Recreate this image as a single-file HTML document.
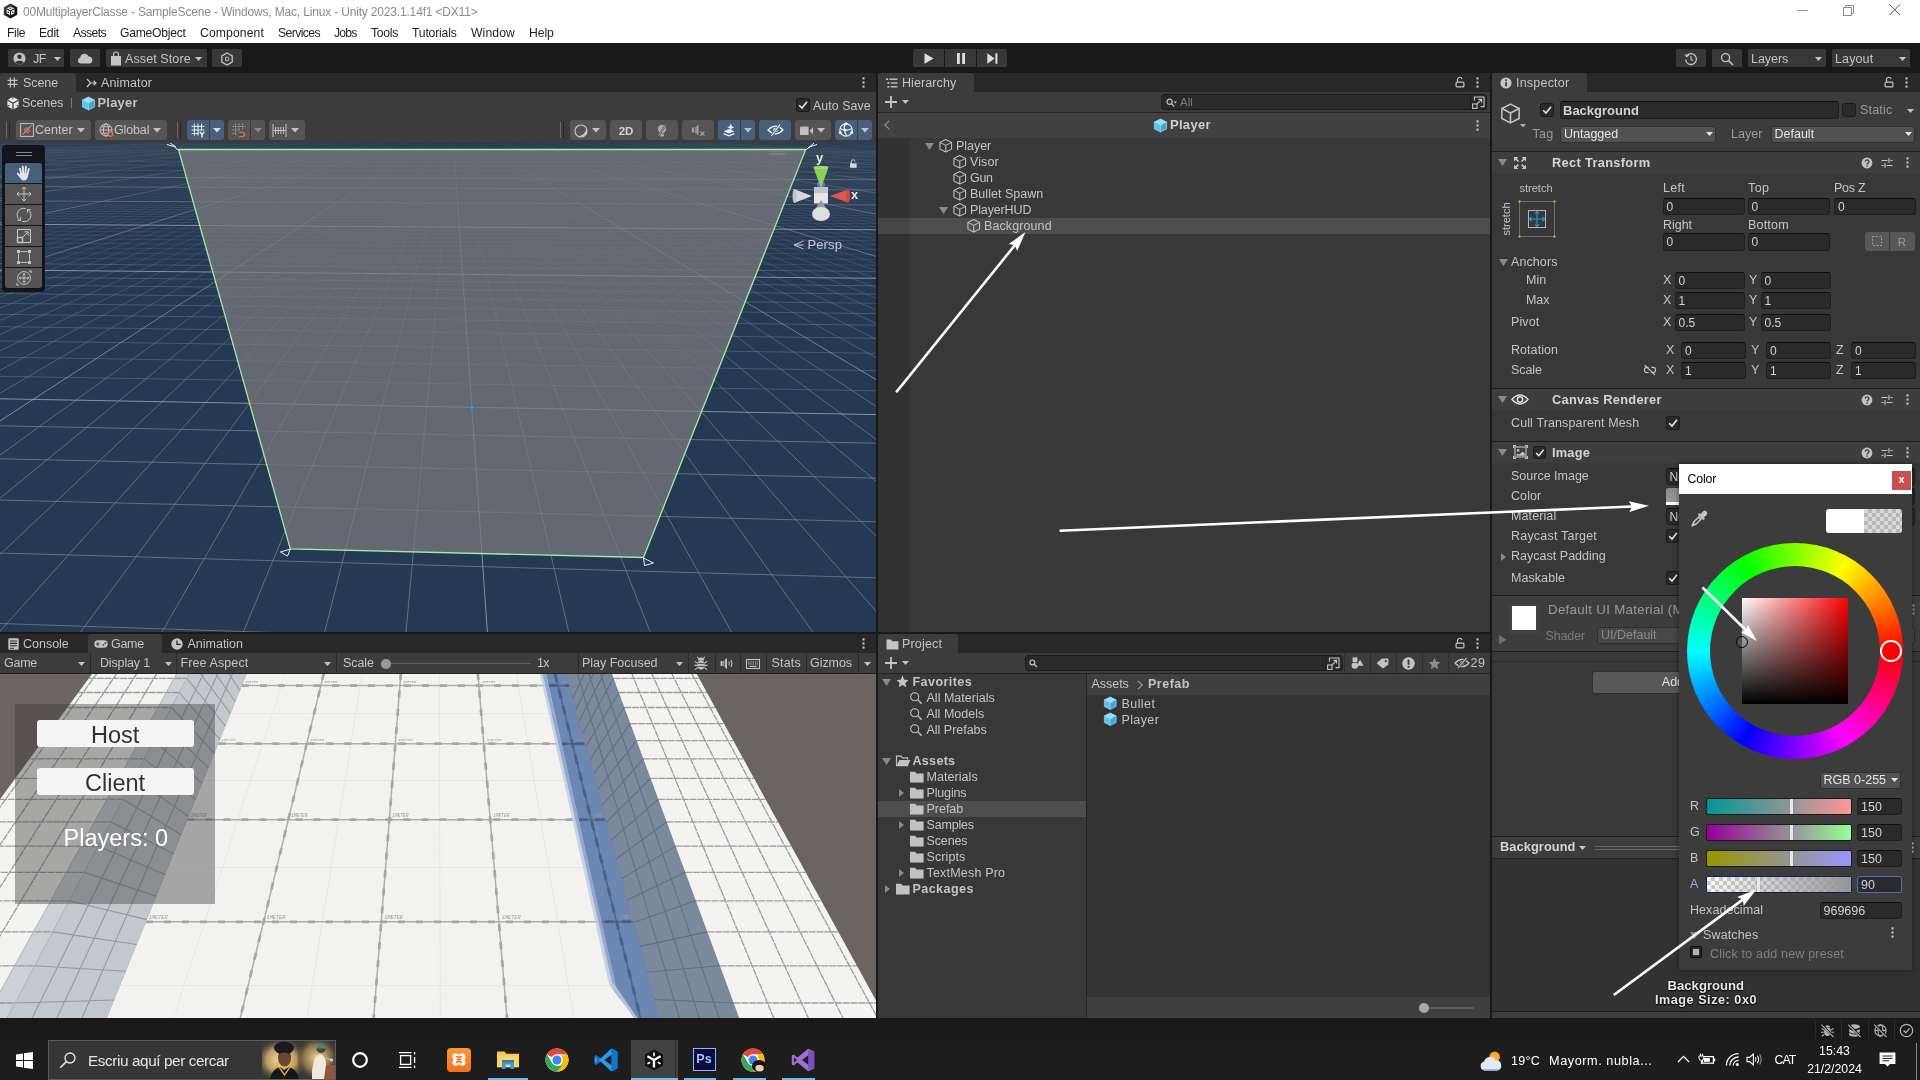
<!DOCTYPE html>
<html><head><meta charset="utf-8"><title>Unity</title>
<style>
html,body{margin:0;padding:0}
body{width:1920px;height:1080px;overflow:hidden;background:#191919;position:relative;
font-family:"Liberation Sans",sans-serif;font-size:12px;color:#c4c4c4}
.a{position:absolute;box-sizing:border-box}
div.a{box-sizing:content-box}
.t{position:absolute;white-space:nowrap}
svg{display:block}
#root{position:absolute;left:0;top:0;width:1920px;height:1080px;will-change:transform}
</style></head>
<body>
<div id="root">
<!-- p_top -->
<div class="a" style="left:0px;top:0px;width:1920px;height:43px;background:#ffffff;"></div>
<svg class="a" style="left:2.6px;top:3px;" width="15" height="16" viewBox="0 0 15 16"><defs><linearGradient id="ul" x1="0" y1="0" x2="1" y2="1"><stop offset="0" stop-color="#555"/><stop offset="0.5" stop-color="#1a1a1a"/><stop offset="1" stop-color="#000"/></linearGradient></defs><path d="M7.5 0.4L14.2 4.2V11.8L7.5 15.6L0.8 11.8V4.2Z" fill="url(#ul)"/><path d="M7.5 3.4L11.4 5.6V10.2L7.5 12.4L3.6 10.2V5.6Z" fill="#f2f2f2"/><path d="M7.5 8V12.4M7.5 8L3.6 5.7M7.5 8L11.4 5.7" stroke="#222" stroke-width="1.1"/><circle cx="7.5" cy="5.2" r="0.8" fill="#222"/><circle cx="5.2" cy="9.2" r="0.8" fill="#222"/><circle cx="9.8" cy="9.2" r="0.8" fill="#222"/></svg>
<div class="t" style="left:23px;top:3.5px;height:16px;line-height:16px;letter-spacing:-0.172px;font-size:12px;color:#8a8a8a;">00MultiplayerClasse - SampleScene - Windows, Mac, Linux - Unity 2023.1.14f1 &lt;DX11&gt;</div>
<div class="a" style="left:1797px;top:10px;width:11px;height:1px;background:#9a9a9a;"></div>
<svg class="a" style="left:1843px;top:5px;" width="12" height="12" viewBox="0 0 12 12"><path d="M0.5 2.5H8.5V10.5H0.5Z M2.5 2.5V0.5H10.5V8.5H8.5" fill="none" stroke="#8a8a8a" stroke-width="1"/></svg>
<svg class="a" style="left:1889px;top:4px;" width="12" height="12" viewBox="0 0 12 12"><path d="M0.5 0.5L11 11M11 0.5L0.5 11" stroke="#555" stroke-width="1"/></svg>
<div class="t" style="left:7px;top:25.0px;height:16px;line-height:16px;letter-spacing:-0.339px;font-size:12.2px;color:#1e1e1e;">File</div>
<div class="t" style="left:39px;top:25.0px;height:16px;line-height:16px;letter-spacing:-0.256px;font-size:12.2px;color:#1e1e1e;">Edit</div>
<div class="t" style="left:73px;top:25.0px;height:16px;line-height:16px;letter-spacing:-0.602px;font-size:12.2px;color:#1e1e1e;">Assets</div>
<div class="t" style="left:120px;top:25.0px;height:16px;line-height:16px;letter-spacing:-0.278px;font-size:12.2px;color:#1e1e1e;">GameObject</div>
<div class="t" style="left:200px;top:25.0px;height:16px;line-height:16px;letter-spacing:0.104px;font-size:12.2px;color:#1e1e1e;">Component</div>
<div class="t" style="left:278px;top:25.0px;height:16px;line-height:16px;letter-spacing:-0.597px;font-size:12.2px;color:#1e1e1e;">Services</div>
<div class="t" style="left:334px;top:25.0px;height:16px;line-height:16px;letter-spacing:-0.767px;font-size:12.2px;color:#1e1e1e;">Jobs</div>
<div class="t" style="left:371px;top:25.0px;height:16px;line-height:16px;letter-spacing:-0.296px;font-size:12.2px;color:#1e1e1e;">Tools</div>
<div class="t" style="left:412px;top:25.0px;height:16px;line-height:16px;letter-spacing:-0.181px;font-size:12.2px;color:#1e1e1e;">Tutorials</div>
<div class="t" style="left:471px;top:25.0px;height:16px;line-height:16px;letter-spacing:0.102px;font-size:12.2px;color:#1e1e1e;">Window</div>
<div class="t" style="left:529px;top:25.0px;height:16px;line-height:16px;letter-spacing:-0.098px;font-size:12.2px;color:#1e1e1e;">Help</div>
<div class="a" style="left:0px;top:43px;width:1920px;height:30px;background:#191919;"></div>
<div class="a" style="left:8px;top:49px;width:56px;height:18px;background:#383838;border-radius:1.5px;"></div>
<svg class="a" style="left:13px;top:52px;" width="13" height="13" viewBox="0 0 13 13"><circle cx="6.5" cy="6.5" r="6" fill="#c4c4c4"/><circle cx="6.5" cy="4.8" r="2.2" fill="#383838"/><path d="M2.3 10.2C3.5 8.2 9.5 8.2 10.7 10.2C9.6 11.6 8 12.4 6.5 12.4S3.4 11.6 2.3 10.2Z" fill="#383838"/></svg>
<div class="t" style="left:33px;top:50.5px;height:16px;line-height:16px;letter-spacing:-0.592px;font-size:12.5px;color:#c4c4c4;">JF</div>
<svg class="a" style="left:53.5px;top:56.5px;" width="7" height="4" viewBox="0 0 7 4"><path d="M0 0H7L3.5 4Z" fill="#c4c4c4"/></svg>
<div class="a" style="left:70px;top:49px;width:30px;height:18px;background:#383838;border-radius:1.5px;"></div>
<svg class="a" style="left:77px;top:53px;" width="16" height="11" viewBox="0 0 16 11"><path d="M3.5 10.5A3 3 0 0 1 3.3 4.6A4.3 4.3 0 0 1 11.6 3.6A3.5 3.5 0 0 1 12.6 10.5Z" fill="#c4c4c4"/></svg>
<div class="a" style="left:106px;top:49px;width:101px;height:18px;background:#383838;border-radius:1.5px;"></div>
<svg class="a" style="left:110px;top:51px;" width="12" height="15" viewBox="0 0 12 15"><path d="M1 5H11V14.5H1Z" fill="#c4c4c4"/><path d="M3.6 5V3.4A2.4 2.4 0 0 1 8.4 3.4V5" fill="none" stroke="#c4c4c4" stroke-width="1.2"/></svg>
<div class="t" style="left:125px;top:50.5px;height:16px;line-height:16px;letter-spacing:0.099px;font-size:12.5px;color:#c4c4c4;">Asset Store</div>
<svg class="a" style="left:194.5px;top:56.5px;" width="7" height="4" viewBox="0 0 7 4"><path d="M0 0H7L3.5 4Z" fill="#c4c4c4"/></svg>
<div class="a" style="left:212px;top:49px;width:30px;height:18px;background:#383838;border-radius:1.5px;"></div>
<svg class="a" style="left:220px;top:52px;" width="14" height="14" viewBox="0 0 14 14"><path d="M7 1L12.2 4V10L7 13L1.8 10V4Z" fill="none" stroke="#c4c4c4" stroke-width="1.3"/><path d="M5.6 5.2H7.2A1.8 1.8 0 0 1 7.2 8.8H5.6Z" fill="none" stroke="#c4c4c4" stroke-width="1"/></svg>
<div class="a" style="left:913px;top:49px;width:31px;height:18px;background:#383838;border-radius:2px 0 0 2px;"></div>
<div class="a" style="left:945px;top:49px;width:31px;height:18px;background:#383838;"></div>
<div class="a" style="left:977px;top:49px;width:30px;height:18px;background:#383838;border-radius:0 2px 2px 0;"></div>
<svg class="a" style="left:924px;top:53px;" width="10" height="11" viewBox="0 0 10 11"><path d="M0.5 0.3L9.5 5.5L0.5 10.7Z" fill="#e0e0e0"/></svg>
<svg class="a" style="left:957px;top:53px;" width="8" height="11" viewBox="0 0 8 11"><rect x="0" y="0" width="2.8" height="11" fill="#e0e0e0"/><rect x="5.2" y="0" width="2.8" height="11" fill="#e0e0e0"/></svg>
<svg class="a" style="left:987px;top:53px;" width="11" height="11" viewBox="0 0 11 11"><path d="M0.3 0.3L7.6 5.5L0.3 10.7Z" fill="#e0e0e0"/><rect x="8.4" y="0.3" width="2" height="10.4" fill="#e0e0e0"/></svg>
<div class="a" style="left:1676px;top:49px;width:30px;height:18px;background:#383838;border-radius:1.5px;"></div>
<svg class="a" style="left:1684px;top:52px;" width="14" height="14" viewBox="0 0 14 14"><path d="M2.4 4.2A5.4 5.4 0 1 1 1.6 7.6" fill="none" stroke="#c4c4c4" stroke-width="1.3"/><path d="M0.4 2.2L2.6 5.6L5.4 3.2Z" fill="#c4c4c4"/><path d="M7 4V7.4L9.2 8.8" fill="none" stroke="#c4c4c4" stroke-width="1.2"/></svg>
<div class="a" style="left:1712px;top:49px;width:30px;height:18px;background:#383838;border-radius:1.5px;"></div>
<svg class="a" style="left:1720px;top:52px;" width="14" height="14" viewBox="0 0 14 14"><circle cx="5.6" cy="5.6" r="4" fill="none" stroke="#c4c4c4" stroke-width="1.3"/><path d="M8.6 8.6L13 13" stroke="#c4c4c4" stroke-width="1.6"/></svg>
<div class="a" style="left:1748px;top:49px;width:78px;height:18px;background:#383838;border-radius:1.5px;"></div>
<div class="t" style="left:1751px;top:50.5px;height:16px;line-height:16px;letter-spacing:-0.036px;font-size:12.5px;color:#c4c4c4;">Layers</div>
<svg class="a" style="left:1815.0px;top:56.5px;" width="7" height="4" viewBox="0 0 7 4"><path d="M0 0H7L3.5 4Z" fill="#c4c4c4"/></svg>
<div class="a" style="left:1832px;top:49px;width:78px;height:18px;background:#383838;border-radius:1.5px;"></div>
<div class="t" style="left:1835px;top:50.5px;height:16px;line-height:16px;letter-spacing:0.129px;font-size:12.5px;color:#c4c4c4;">Layout</div>
<svg class="a" style="left:1899.0px;top:56.5px;" width="7" height="4" viewBox="0 0 7 4"><path d="M0 0H7L3.5 4Z" fill="#c4c4c4"/></svg>
<!-- p_scene -->
<div class="a" style="left:0px;top:73px;width:876px;height:19px;background:#282828;"></div>
<div class="a" style="left:0px;top:73px;width:76px;height:19px;background:#3c3c3c;border-radius:3px 3px 0 0;"></div>
<svg class="a" style="left:7px;top:77px;" width="11" height="11" viewBox="0 0 11 11"><path d="M3.3 0.5V10.5M7.3 0.5V10.5M0.5 3.3H10.5M0.5 7.3H10.5" stroke="#c4c4c4" stroke-width="1.2"/></svg>
<div class="t" style="left:23px;top:75.0px;height:16px;line-height:16px;letter-spacing:-0.088px;font-size:12.5px;">Scene</div>
<svg class="a" style="left:86px;top:78px;" width="11" height="10" viewBox="0 0 11 10"><path d="M1 1L4.6 5H10M1 9L4.6 5M7.6 2.8L10 5L7.6 7.2" fill="none" stroke="#c4c4c4" stroke-width="1.2"/></svg>
<div class="t" style="left:101px;top:75.0px;height:16px;line-height:16px;letter-spacing:0.123px;font-size:12.5px;">Animator</div>
<svg class="a" style="left:861.5px;top:77.0px;" width="3" height="11" viewBox="0 0 3 11"><g fill="#c4c4c4"><rect x="0.5" y="0.3" width="2" height="2.2"/><rect x="0.5" y="4.4" width="2" height="2.2"/><rect x="0.5" y="8.5" width="2" height="2.2"/></g></svg>
<div class="a" style="left:0px;top:92px;width:876px;height:51px;background:#3c3c3c;"></div>
<div class="a" style="left:0px;top:116.5px;width:876px;height:1px;background:#393939;"></div>
<svg class="a" style="left:6px;top:96px;" width="14" height="14" viewBox="0 0 14 14"><path d="M7 0.8L12.6 4V10.4L7 13.6L1.4 10.4V4Z" fill="#e6e6e6"/><path d="M7 7.2V13.6M7 7.2L1.4 4M7 7.2L12.6 4" stroke="#3c3c3c" stroke-width="1.3"/><path d="M7 0.8V3M1.4 10.4L3.4 9.2M12.6 10.4L10.6 9.2" stroke="#3c3c3c" stroke-width="1.1"/></svg>
<div class="t" style="left:22px;top:95.0px;height:16px;line-height:16px;letter-spacing:-0.065px;font-size:12.5px;">Scenes</div>
<div class="a" style="left:71px;top:98px;width:1px;height:10px;background:#7a7a7a;"></div>
<svg class="a" style="left:81px;top:95.5px;" width="15" height="15" viewBox="0 0 16 16"><path d="M8 1L14.5 4.2L8 7.6L1.5 4.2Z" fill="#8fe0ff"/><path d="M1.5 4.2L8 7.6V15L1.5 11.6Z" fill="#5cc3f0"/><path d="M14.5 4.2L8 7.6V15L14.5 11.6Z" fill="#3fa6d8"/><path d="M8 1L14.5 4.2V11.6L8 15L1.5 11.6V4.2Z M1.5 4.2L8 7.6L14.5 4.2M8 7.6V15" fill="none" stroke="#bfeeff" stroke-width="0.6" stroke-linejoin="round"/></svg>
<div class="t" style="left:97.5px;top:95.0px;height:16px;line-height:16px;letter-spacing:0.295px;font-size:12.8px;font-weight:bold;">Player</div>
<div class="a" style="left:796px;top:98px;width:12px;height:12px;background:#2a2a2a;border:1px solid #1a1a1a;border-radius:2.5px;"><svg width="14" height="14" viewBox="0 0 14 14" style="position:absolute;left:-1px;top:-1px"><path d="M3.2 7.2L6 10L11 3.8" fill="none" stroke="#e4e4e4" stroke-width="1.6"/></svg></div>
<div class="t" style="left:813px;top:97.5px;height:16px;line-height:16px;letter-spacing:0.105px;font-size:12.3px;">Auto Save</div>
<div class="a" style="left:6px;top:122px;width:1px;height:16px;background:#6a6a6a;"></div><div class="a" style="left:9px;top:122px;width:1px;height:16px;background:#2a2a2a;"></div>
<div class="a" style="left:16px;top:120px;width:75px;height:20px;background:#555555;border-radius:3px;"></div>
<svg class="a" style="left:20px;top:123px;" width="14" height="14" viewBox="0 0 14 14"><rect x="0.6" y="0.6" width="12.8" height="12.8" fill="none" stroke="#c4c4c4" stroke-width="1"/><path d="M2.5 11.5L11.5 2.5" stroke="#c4c4c4" stroke-width="0.9"/><circle cx="7" cy="7" r="2.2" fill="none" stroke="#ff6a3c" stroke-width="1.3"/></svg>
<div class="t" style="left:35px;top:122.0px;height:16px;line-height:16px;letter-spacing:0.031px;font-size:12.5px;">Center</div>
<svg class="a" style="left:77.0px;top:128.2px;" width="8" height="4.6" viewBox="0 0 8 4.6"><path d="M0 0H8L4.0 4.6Z" fill="#c4c4c4"/></svg>
<div class="a" style="left:95px;top:120px;width:72px;height:20px;background:#555555;border-radius:3px;"></div>
<svg class="a" style="left:98.5px;top:123px;" width="16" height="14" viewBox="0 0 16 14"><g fill="none" stroke="#c4c4c4" stroke-width="1"><circle cx="7" cy="7" r="6"/><ellipse cx="7" cy="7" rx="2.6" ry="6"/><path d="M1 7H13M2 3.8H12M2 10.2H12"/></g><circle cx="11.5" cy="11" r="2.2" fill="#555" stroke="#ff6a3c" stroke-width="1.3"/></svg>
<div class="t" style="left:114px;top:122.0px;height:16px;line-height:16px;letter-spacing:-0.138px;font-size:12.5px;">Global</div>
<svg class="a" style="left:153.0px;top:128.2px;" width="8" height="4.6" viewBox="0 0 8 4.6"><path d="M0 0H8L4.0 4.6Z" fill="#c4c4c4"/></svg>
<div class="a" style="left:177px;top:122px;width:1px;height:16px;background:#6a6a6a;"></div><div class="a" style="left:180px;top:122px;width:1px;height:16px;background:#2a2a2a;"></div>
<div class="a" style="left:187px;top:120px;width:22px;height:20px;background:#46607c;border-radius:3px 0 0 3px;"></div>
<svg class="a" style="left:190.5px;top:122.5px;" width="15" height="15" viewBox="0 0 15 15"><path d="M3.4 0.6V12.6M7 0.6V12.6M10.6 0.6V7.4M0.6 3.4H13.4M0.6 7H13.4M0.6 10.6H7.6" stroke="#f0f0f0" stroke-width="1" fill="none"/><path d="M8.8 8.8L11 11.6L13.2 8.8M11 11.6V14.6" stroke="#f0f0f0" stroke-width="1.4" fill="none"/></svg>
<div class="a" style="left:210px;top:120px;width:14px;height:20px;background:#46607c;border-radius:0 3px 3px 0;"></div>
<svg class="a" style="left:213.0px;top:128.2px;" width="8" height="4.6" viewBox="0 0 8 4.6"><path d="M0 0H8L4.0 4.6Z" fill="#d8d8d8"/></svg>
<div class="a" style="left:228px;top:120px;width:22px;height:20px;background:#555555;border-radius:3px 0 0 3px;"></div>
<svg class="a" style="left:231.5px;top:122.5px;" width="15" height="15" viewBox="0 0 15 15"><path d="M3.4 0.6V12.6M7 0.6V8M10.6 0.6V6.4M0.6 3.4H13.4M0.6 7H8M0.6 10.6H5.6" stroke="#a8a8a8" stroke-width="1" stroke-dasharray="1.4 1" fill="none"/><path d="M7 9.4H10.4A2.1 2.1 0 0 1 10.4 13.6H7" stroke="#e0693c" stroke-width="1.4" fill="none"/></svg>
<div class="a" style="left:251px;top:120px;width:14px;height:20px;background:#555555;border-radius:0 3px 3px 0;"></div>
<svg class="a" style="left:254.0px;top:128.2px;" width="8" height="4.6" viewBox="0 0 8 4.6"><path d="M0 0H8L4.0 4.6Z" fill="#8a8a8a"/></svg>
<div class="a" style="left:269px;top:120px;width:36px;height:20px;background:#555555;border-radius:3px;"></div>
<svg class="a" style="left:272px;top:123.5px;" width="16" height="13" viewBox="0 0 16 13"><path d="M1 0V13M14 0V13M3.6 3V10M6.2 3V10M8.8 3V10M11.4 3V10M1 6.5H14" stroke="#c4c4c4" stroke-width="1" fill="none"/></svg>
<svg class="a" style="left:291.0px;top:128.2px;" width="8" height="4.6" viewBox="0 0 8 4.6"><path d="M0 0H8L4.0 4.6Z" fill="#c4c4c4"/></svg>
<div class="a" style="left:560px;top:122px;width:1px;height:16px;background:#6a6a6a;"></div><div class="a" style="left:563px;top:122px;width:1px;height:16px;background:#2a2a2a;"></div>
<div class="a" style="left:570px;top:120px;width:36px;height:20px;background:#555555;border-radius:3px;"></div>
<svg class="a" style="left:573.5px;top:123.5px;" width="14" height="14" viewBox="0 0 14 14"><circle cx="7" cy="7" r="6" fill="none" stroke="#c4c4c4" stroke-width="1.2"/><path d="M12.2 4A6 6 0 0 1 4 12.2A8.2 8.2 0 0 0 12.2 4Z" fill="#c4c4c4"/></svg>
<svg class="a" style="left:592.0px;top:128.2px;" width="8" height="4.6" viewBox="0 0 8 4.6"><path d="M0 0H8L4.0 4.6Z" fill="#c4c4c4"/></svg>
<div class="a" style="left:610px;top:120px;width:32px;height:20px;background:#555555;border-radius:3px;"></div>
<div class="t" style="left:610.0px;top:122.5px;height:16px;line-height:16px;font-size:11.5px;width:32px;text-align:center;font-weight:bold;color:#d4d4d4;">2D</div>
<div class="a" style="left:646px;top:120px;width:32px;height:20px;background:#555555;border-radius:3px;"></div>
<svg class="a" style="left:655px;top:122.5px;" width="14" height="15" viewBox="0 0 14 15"><circle cx="7" cy="6" r="4.2" fill="#a8a8a8"/><rect x="5" y="10.4" width="4" height="3.2" rx="1" fill="#a8a8a8"/><path d="M11.4 1L2.8 13.6" stroke="#555" stroke-width="2"/><path d="M11 1.6L3.4 12.6" stroke="#a8a8a8" stroke-width="0.9"/></svg>
<div class="a" style="left:682px;top:120px;width:32px;height:20px;background:#555555;border-radius:3px;"></div>
<svg class="a" style="left:691px;top:124px;" width="15" height="13" viewBox="0 0 15 13"><path d="M1 3.4H2.8V8.6H1ZM3.8 3.6L7.4 0.8V11.2L3.8 8.4Z" fill="#a8a8a8"/><path d="M5 0.8V11" stroke="#555" stroke-width="0.8"/><path d="M9.4 7.6L13.4 11.6M13.4 7.6L9.4 11.6" stroke="#a8a8a8" stroke-width="1.1"/></svg>
<div class="a" style="left:718px;top:120px;width:22px;height:20px;background:#46607c;border-radius:3px 0 0 3px;"></div>
<svg class="a" style="left:721.5px;top:122.5px;" width="15" height="15" viewBox="0 0 15 15"><path d="M1.6 8.2L7 6L12.4 8.2L7 10.4Z" fill="#f0f0f0"/><path d="M1.6 10.6L7 12.8L12.4 10.6" fill="none" stroke="#f0f0f0" stroke-width="1.3"/><path d="M8.8 0.6L9.8 3.2L12.4 4.2L9.8 5.2L8.8 7.8L7.8 5.2L5.2 4.2L7.8 3.2Z" fill="#f0f0f0"/></svg>
<div class="a" style="left:741px;top:120px;width:14px;height:20px;background:#46607c;border-radius:0 3px 3px 0;"></div>
<svg class="a" style="left:744.0px;top:128.2px;" width="8" height="4.6" viewBox="0 0 8 4.6"><path d="M0 0H8L4.0 4.6Z" fill="#c0c0c0"/></svg>
<div class="a" style="left:759px;top:120px;width:32px;height:20px;background:#46607c;border-radius:3px;"></div>
<svg class="a" style="left:766.5px;top:123px;" width="17" height="14" viewBox="0 0 17 14"><path d="M1 7Q8.5 -0.6 16 7Q8.5 14.6 1 7Z" fill="none" stroke="#f0f0f0" stroke-width="1.2"/><circle cx="8.5" cy="7" r="2.3" fill="#f0f0f0"/><path d="M13.6 1L4 13.4" stroke="#46607c" stroke-width="2.6"/><path d="M13.2 1.4L4.4 13" stroke="#f0f0f0" stroke-width="1.1"/></svg>
<div class="a" style="left:795px;top:120px;width:36px;height:20px;background:#555555;border-radius:3px;"></div>
<svg class="a" style="left:799.5px;top:125.5px;" width="14" height="10" viewBox="0 0 14 10"><rect x="0" y="0.5" width="8.6" height="8.6" rx="1.2" fill="#c0c0c0"/><path d="M9.6 4.8L13 1.2V8.6Z" fill="#c0c0c0"/></svg>
<svg class="a" style="left:817.0px;top:128.2px;" width="8" height="4.6" viewBox="0 0 8 4.6"><path d="M0 0H8L4.0 4.6Z" fill="#c4c4c4"/></svg>
<div class="a" style="left:835px;top:120px;width:22px;height:20px;background:#46607c;border-radius:3px 0 0 3px;"></div>
<svg class="a" style="left:838px;top:122px;" width="16" height="16" viewBox="0 0 16 16"><g fill="none" stroke="#f0f0f0" stroke-width="1.2"><circle cx="8" cy="8" r="6.2"/><path d="M2 6.6Q8 10 14 6.6M7 2Q4.6 8 9 14"/></g><g fill="#f0f0f0"><circle cx="8" cy="1.8" r="1.5"/><circle cx="2.2" cy="10.6" r="1.5"/><circle cx="13.8" cy="10.6" r="1.5"/><circle cx="7.2" cy="8.2" r="1.4"/></g></svg>
<div class="a" style="left:858px;top:120px;width:14px;height:20px;background:#46607c;border-radius:0 3px 3px 0;"></div>
<svg class="a" style="left:861.0px;top:128.2px;" width="8" height="4.6" viewBox="0 0 8 4.6"><path d="M0 0H8L4.0 4.6Z" fill="#c0c0c0"/></svg>
<svg class="a" style="left:0px;top:143px;overflow:hidden;" width="876" height="489" viewBox="0 0 876 489"><defs><linearGradient id="gmin" gradientUnits="userSpaceOnUse" x1="0" y1="0" x2="0" y2="300"><stop offset="0" stop-color="#828282" stop-opacity="0.015"/><stop offset="0.1" stop-color="#828282" stop-opacity="0.05"/><stop offset="0.3" stop-color="#828282" stop-opacity="0.18"/><stop offset="0.6" stop-color="#828282" stop-opacity="0.45"/><stop offset="1" stop-color="#828282" stop-opacity="0.72"/></linearGradient><linearGradient id="gmaj" gradientUnits="userSpaceOnUse" x1="0" y1="0" x2="0" y2="300"><stop offset="0" stop-color="#a8a8a8" stop-opacity="0.06"/><stop offset="0.1" stop-color="#a8a8a8" stop-opacity="0.2"/><stop offset="0.25" stop-color="#a8a8a8" stop-opacity="0.45"/><stop offset="1" stop-color="#a8a8a8" stop-opacity="0.78"/></linearGradient></defs><rect width="876" height="489" fill="#233954"/><g fill="none" stroke-width="1"><path d="M150.9 0.0L-2.0 7.6M153.3 0.0L-2.0 7.8M155.7 0.0L-2.0 8.0M158.1 0.0L-2.0 8.2M160.5 0.0L-2.0 8.4M165.4 0.0L-2.0 8.7M167.8 0.0L-2.0 8.9M170.2 0.0L-2.0 9.2M172.6 0.0L-2.0 9.4M175.1 0.0L-2.0 9.6M177.5 0.0L-2.0 9.8M179.9 0.0L-2.0 10.0M182.3 0.0L-2.0 10.2M184.8 0.0L-2.0 10.5M189.6 0.0L-2.0 10.9M192.0 0.0L-2.0 11.2M194.4 0.0L-2.0 11.4M196.9 0.0L-2.0 11.7M199.3 0.0L-2.0 11.9M201.7 0.0L-2.0 12.2M204.1 0.0L-2.0 12.4M206.5 0.0L-2.0 12.7M209.0 0.0L-2.0 13.0M213.8 0.0L-2.0 13.6M216.2 0.0L-2.0 13.9M218.7 0.0L-2.0 14.2M221.1 0.0L-2.0 14.5M223.5 0.0L-2.0 14.8M225.9 0.0L-2.0 15.1M228.3 0.0L-2.0 15.4M230.8 0.0L-2.0 15.7M233.2 0.0L-2.0 16.1M238.0 0.0L-2.0 16.8M240.4 0.0L-2.0 17.2M242.9 0.0L-2.0 17.5M245.3 0.0L-2.0 17.9M247.7 0.0L-2.0 18.3M250.1 0.0L-2.0 18.7M252.6 0.0L-2.0 19.1M255.0 0.0L-2.0 19.5M257.4 0.0L-2.0 19.9M262.2 0.0L-2.0 20.8M264.7 0.0L-2.0 21.3M267.1 0.0L-2.0 21.8M269.5 0.0L-2.0 22.3M271.9 0.0L-2.0 22.8M274.3 0.0L-2.0 23.3M276.8 0.0L-2.0 23.8M279.2 0.0L-2.0 24.3M281.6 0.0L-2.0 24.9M286.5 0.0L-2.0 26.1M288.9 0.0L-2.0 26.7M291.3 0.0L-2.0 27.3M293.7 0.0L-2.0 27.9M296.1 0.0L-2.0 28.6M298.6 0.0L-2.0 29.3M301.0 0.0L-2.0 30.0M303.4 0.0L-2.0 30.7M305.8 0.0L-2.0 31.5M310.7 0.0L-2.0 33.1M313.1 0.0L-2.0 33.9M315.5 0.0L-2.0 34.8M317.9 0.0L-2.0 35.7M320.4 0.0L-2.0 36.6M322.8 0.0L-2.0 37.6M325.2 0.0L-2.0 38.6M327.6 0.0L-2.0 39.6M330.0 0.0L-2.0 40.7M334.9 0.0L-2.0 43.0M337.3 0.0L-2.0 44.2M339.7 0.0L-2.0 45.5M342.2 0.0L-2.0 46.8M344.6 0.0L-2.0 48.2M347.0 0.0L-2.0 49.6M349.4 0.0L-2.0 51.1M351.8 0.0L-2.0 52.7M354.3 0.0L-2.0 54.4M359.1 0.0L-2.0 58.0M361.5 0.0L-2.0 59.9M363.9 0.0L-2.0 62.0M366.4 0.0L-2.0 64.1M368.8 0.0L-2.0 66.4M371.2 0.0L-2.0 68.9M373.6 0.0L-2.0 71.4M376.1 0.0L-2.0 74.2M378.5 0.0L-2.0 77.1M383.3 0.0L-2.0 83.5M385.7 0.0L-2.0 87.1M388.2 0.0L-2.0 91.0M390.6 0.0L-2.0 95.1M393.0 0.0L-2.0 99.6M395.4 0.0L-2.0 104.4M397.8 0.0L-2.0 109.7M400.3 0.0L-2.0 115.5M402.7 0.0L-2.0 121.9M407.5 0.0L-2.0 136.6M410.0 0.0L-2.0 145.2M412.4 0.0L-2.0 154.9M414.8 0.0L-2.0 165.8M417.2 0.0L-2.0 178.2M419.6 0.0L-2.0 192.5M422.1 0.0L-2.0 209.0M424.5 0.0L-2.0 228.3M426.9 0.0L-2.0 251.3M431.7 0.0L-2.0 313.5M434.2 0.0L-2.0 356.9M436.6 0.0L-2.0 413.4M439.0 0.0L-2.0 490.3M441.4 0.0L79.1 491.0M443.9 0.0L160.8 491.0M446.3 0.0L242.5 491.0M448.7 0.0L324.1 491.0M451.1 0.0L405.8 491.0M456.0 0.0L569.2 491.0M458.4 0.0L650.9 491.0M460.8 0.0L732.6 491.0M463.2 0.0L814.2 491.0M465.6 0.0L878.0 470.5M468.1 0.0L878.0 395.0M470.5 0.0L878.0 339.8M472.9 0.0L878.0 297.7M475.3 0.0L878.0 264.6M480.2 0.0L878.0 215.6M482.6 0.0L878.0 197.1M485.0 0.0L878.0 181.3M487.4 0.0L878.0 167.7M489.9 0.0L878.0 155.8M492.3 0.0L878.0 145.4M494.7 0.0L878.0 136.2M497.1 0.0L878.0 128.0M499.5 0.0L878.0 120.7M504.4 0.0L878.0 108.0M506.8 0.0L878.0 102.5M509.2 0.0L878.0 97.5M511.7 0.0L878.0 92.9M514.1 0.0L878.0 88.7M516.5 0.0L878.0 84.7M518.9 0.0L878.0 81.1M521.3 0.0L878.0 77.7M523.8 0.0L878.0 74.6M528.6 0.0L878.0 68.9M531.0 0.0L878.0 66.3M533.4 0.0L878.0 63.8M535.9 0.0L878.0 61.6M538.3 0.0L878.0 59.4M540.7 0.0L878.0 57.4M543.1 0.0L878.0 55.4M545.6 0.0L878.0 53.6M548.0 0.0L878.0 51.8M552.8 0.0L878.0 48.6M555.2 0.0L878.0 47.1M557.7 0.0L878.0 45.7M560.1 0.0L878.0 44.3M562.5 0.0L878.0 43.0M564.9 0.0L878.0 41.8M567.3 0.0L878.0 40.6M569.8 0.0L878.0 39.4M572.2 0.0L878.0 38.3M577.0 0.0L878.0 36.3M579.5 0.0L878.0 35.3M581.9 0.0L878.0 34.3M584.3 0.0L878.0 33.4M586.7 0.0L878.0 32.6M589.1 0.0L878.0 31.7M591.6 0.0L878.0 30.9M594.0 0.0L878.0 30.1M596.4 0.0L878.0 29.4M601.2 0.0L878.0 27.9M603.7 0.0L878.0 27.2M606.1 0.0L878.0 26.6M608.5 0.0L878.0 25.9M610.9 0.0L878.0 25.3M613.4 0.0L878.0 24.7M615.8 0.0L878.0 24.1M618.2 0.0L878.0 23.5M620.6 0.0L878.0 23.0M625.5 0.0L878.0 21.9M627.9 0.0L878.0 21.4M630.3 0.0L878.0 20.9M632.7 0.0L878.0 20.4M635.1 0.0L878.0 19.9M637.6 0.0L878.0 19.5M640.0 0.0L878.0 19.0M642.4 0.0L878.0 18.6M644.8 0.0L878.0 18.2M649.7 0.0L878.0 17.4M652.1 0.0L878.0 17.0M654.5 0.0L878.0 16.6M656.9 0.0L878.0 16.2M659.4 0.0L878.0 15.9M661.8 0.0L878.0 15.5M664.2 0.0L878.0 15.1M666.6 0.0L878.0 14.8M669.0 0.0L878.0 14.5M673.9 0.0L878.0 13.8M676.3 0.0L878.0 13.5M678.7 0.0L878.0 13.2M681.2 0.0L878.0 12.9M683.6 0.0L878.0 12.6M686.0 0.0L878.0 12.3M688.4 0.0L878.0 12.1M690.8 0.0L878.0 11.8M693.3 0.0L878.0 11.5M698.1 0.0L878.0 11.0M700.5 0.0L878.0 10.7M702.9 0.0L878.0 10.5M705.4 0.0L878.0 10.2M707.8 0.0L878.0 10.0M710.2 0.0L878.0 9.8M712.6 0.0L878.0 9.5M715.1 0.0L878.0 9.3M717.5 0.0L878.0 9.1M722.3 0.0L878.0 8.7M724.7 0.0L878.0 8.4M727.2 0.0L878.0 8.2M729.6 0.0L878.0 8.0M732.0 0.0L878.0 7.8" stroke="url(#gmin)"/><path d="M0 480.5L876 509.5M0 410.0L876 434.8M0 357.0L876 378.8M0 315.8L876 335.1M0 282.8L876 300.2" stroke="#828282" stroke-opacity="0.72"/><path d="M0 233.3L876 247.8M0 214.2L876 227.6M0 197.9L876 210.3M0 183.7L876 195.3M0 171.3L876 182.2M0 160.3L876 170.6M0 150.6L876 160.3M0 141.9L876 151.1M0 134.1L876 142.8M0 120.5L876 128.5" stroke="#828282" stroke-opacity="0.42"/><path d="M0 114.7L876 122.2M0 109.3L876 116.5M0 104.3L876 111.3M0 99.7L876 106.4M0 95.5L876 101.9M0 91.5L876 97.7M0 87.8L876 93.9M0 84.4L876 90.2M0 78.2L876 83.7M0 75.4L876 80.7M0 72.7L876 77.9M0 70.2L876 75.2M0 67.9L876 72.7M0 65.6L876 70.3M0 63.5L876 68.1M0 61.5L876 66.0" stroke="#828282" stroke-opacity="0.21"/><path d="M0 59.6L876 63.9M0 56.0L876 60.2M0 54.4L876 58.4M0 52.8L876 56.8M0 51.3L876 55.2M0 49.9L876 53.6M0 48.5L876 52.2M0 47.2L876 50.8M0 45.9L876 49.4M0 44.7L876 48.2M0 42.4L876 45.7M0 41.3L876 44.6M0 40.3L876 43.5M0 39.3L876 42.4M0 38.3L876 41.4M0 37.3L876 40.4M0 36.4L876 39.5M0 35.6L876 38.5M0 34.7L876 37.6M0 33.1L876 35.9M0 32.4L876 35.1M0 31.6L876 34.3M0 30.9L876 33.6M0 30.2L876 32.9" stroke="#828282" stroke-opacity="0.1"/><path d="M0 29.5L876 32.1M0 28.9L876 31.4M0 28.2L876 30.8M0 27.6L876 30.1M0 26.4L876 28.9M0 25.9L876 28.3M0 25.3L876 27.7M0 24.8L876 27.1M0 24.3L876 26.6M0 23.8L876 26.0M0 23.3L876 25.5M0 22.8L876 25.0M0 22.3L876 24.5M0 21.4L876 23.5M0 21.0L876 23.1M0 20.5L876 22.6M0 20.1L876 22.2M0 19.7L876 21.7M0 19.3L876 21.3M0 18.9L876 20.9M0 18.5L876 20.5M0 18.2L876 20.1M0 17.4L876 19.3M0 17.1L876 19.0M0 16.7L876 18.6M0 16.4L876 18.2M0 16.1L876 17.9M0 15.8L876 17.6M0 15.5L876 17.2M0 15.1L876 16.9M0 14.8L876 16.6M0 14.3L876 16.0M0 14.0L876 15.7M0 13.7L876 15.4M0 13.4L876 15.1M0 13.2L876 14.8M0 12.9L876 14.5M0 12.6L876 14.2M0 12.4L876 14.0M0 12.1L876 13.7M0 11.6L876 13.2M0 11.4L876 13.0M0 11.2L876 12.7M0 11.0L876 12.5M0 10.7L876 12.2M0 10.5L876 12.0M0 10.3L876 11.8M0 10.1L876 11.5M0 9.9L876 11.3M0 9.5L876 10.9M0 9.3L876 10.7M0 9.1L876 10.5M0 8.9L876 10.3M0 8.7L876 10.1M0 8.5L876 9.9M0 8.3L876 9.7M0 8.1L876 9.5M0 8.0L876 9.3M0 7.6L876 8.9M0 7.4L876 8.8M0 7.3L876 8.6M0 7.1L876 8.4M0 6.9L876 8.2" stroke="#828282" stroke-opacity="0.04"/><path d="M17.7 0.0L-2.0 0.7M41.9 0.0L-2.0 1.6M66.1 0.0L-2.0 2.6M90.3 0.0L-2.0 3.8M114.5 0.0L-2.0 5.2M138.7 0.0L-2.0 6.7M163.0 0.0L-2.0 8.5M187.2 0.0L-2.0 10.7M211.4 0.0L-2.0 13.3M235.6 0.0L-2.0 16.4M259.8 0.0L-2.0 20.4M284.0 0.0L-2.0 25.5M308.2 0.0L-2.0 32.3M332.5 0.0L-2.0 41.8M356.7 0.0L-2.0 56.1M380.9 0.0L-2.0 80.2M405.1 0.0L-2.0 128.9M429.3 0.0L-2.0 279.2M453.5 0.0L487.5 491.0M477.8 0.0L878.0 237.7M502.0 0.0L878.0 114.0M526.2 0.0L878.0 71.6M550.4 0.0L878.0 50.2M574.6 0.0L878.0 37.3M598.8 0.0L878.0 28.6M623.0 0.0L878.0 22.4M647.3 0.0L878.0 17.8M671.5 0.0L878.0 14.1M695.7 0.0L878.0 11.2M719.9 0.0L878.0 8.9M744.1 0.0L878.0 6.9M768.3 0.0L878.0 5.2M792.5 0.0L878.0 3.8M816.8 0.0L878.0 2.5M841.0 0.0L878.0 1.4M865.2 0.0L878.0 0.5" stroke="url(#gmaj)"/><path d="M0 14.5L876 16.3M0 11.9L876 13.5M0 9.7L876 11.1M0 7.8L876 9.1M0 6.2L876 7.4M0 4.8L876 5.9M0 3.5L876 4.6M0 1.5L876 2.5" stroke="#a8a8a8" stroke-opacity="0.06"/><path d="M0 27.0L876 29.5M0 21.8L876 24.0M0 17.8L876 19.7" stroke="#a8a8a8" stroke-opacity="0.16"/><path d="M0 57.8L876 62.0M0 43.5L876 46.9M0 33.9L876 36.8" stroke="#a8a8a8" stroke-opacity="0.42"/><path d="M0 255.8L876 271.6M0 127.0L876 135.3M0 81.2L876 86.8" stroke="#a8a8a8" stroke-opacity="0.78"/></g><path d="M178.5 6.5L805.7 6.5L643.5 414.5L290.3 405.9Z" fill="rgb(122,122,126)" fill-opacity="0.74" stroke="#9ef09e" stroke-width="1.3"/><circle cx="472" cy="264.5" r="2.3" fill="#3aa0e0" stroke="#1d6aa8" stroke-width="0.8"/><path d="M280.3 409L290.3 406.2L287.5 413.1Z M653.5 420L643.5 415L644.5 422.6Z" fill="#233954" stroke="#f0f0f0" stroke-width="1"/><path d="M167 1.5L174 3.5L178 7M170 0L176 4M817 1.5L809 4L806 7M814 0L808.5 5" fill="none" stroke="#f0f0f0" stroke-width="1"/></svg>
<div class="a" style="left:2px;top:145px;width:43px;height:146.5px;background:#12151a;border-radius:4px;"></div><div class="a" style="left:16px;top:152px;width:16px;height:1px;background:#8a8a8a;"></div><div class="a" style="left:16px;top:155px;width:16px;height:1px;background:#8a8a8a;"></div><div class="a" style="left:5px;top:163px;width:37px;height:20px;background:#46607c;border-radius:3px 3px 0 0;"></div><div class="a" style="left:5px;top:184px;width:37px;height:20px;background:#555555;"></div><div class="a" style="left:5px;top:205px;width:37px;height:20px;background:#555555;"></div><div class="a" style="left:5px;top:226px;width:37px;height:20px;background:#555555;"></div><div class="a" style="left:5px;top:247px;width:37px;height:20px;background:#555555;"></div><div class="a" style="left:5px;top:268px;width:37px;height:20px;background:#555555;border-radius:0 0 3px 3px;"></div><svg class="a" style="left:15.5px;top:165px;" width="16" height="16" viewBox="0 0 16 16"><g fill="none" stroke="#e4e4e4" stroke-width="1.9" stroke-linecap="round"><path d="M5.2 9L4 3.6M7.2 8.4L6.8 1.6M9.4 8.4L9.9 1.8M11.4 9.2L12.8 4"/><path d="M4.6 12L1.8 8.6"/></g><path d="M4 8.2H12.4L12 11.8Q11 15.4 8 15.4Q5.2 15.4 3.4 11.4Z" fill="#e4e4e4"/></svg><svg class="a" style="left:15.5px;top:186px;" width="16" height="16" viewBox="0 0 16 16"><g fill="none" stroke="#c4c4c4" stroke-width="1"><path d="M8 1V15M1 8H15"/><path d="M5.8 3.2L8 1L10.2 3.2M5.8 12.8L8 15L10.2 12.8M3.2 5.8L1 8L3.2 10.2M12.8 5.8L15 8L12.8 10.2"/></g></svg><svg class="a" style="left:15.5px;top:207px;" width="16" height="16" viewBox="0 0 16 16"><g fill="none" stroke="#c4c4c4" stroke-width="1"><path d="M9.6 1.6A6.6 6.6 0 0 0 4 13.4"/><path d="M6.4 14.4A6.6 6.6 0 0 0 12 2.6"/><path d="M1.4 13.4H4.6V10.2M14.6 2.6H11.4V5.8"/></g></svg><svg class="a" style="left:15.5px;top:228px;" width="16" height="16" viewBox="0 0 16 16"><g fill="none" stroke="#c4c4c4" stroke-width="1"><rect x="1.5" y="1.5" width="13" height="13"/><rect x="1.5" y="9.5" width="5" height="5" stroke-width="1.4"/><path d="M7 9L12 4M8.4 3.8H12.2V7.6"/></g></svg><svg class="a" style="left:15.5px;top:249px;" width="16" height="16" viewBox="0 0 16 16"><path d="M4.6 2.5H11.4M4.6 13.5H11.4M2.5 4.6V11.4M13.5 4.6V11.4" fill="none" stroke="#c4c4c4" stroke-width="1"/><g fill="#c4c4c4"><rect x="1" y="1" width="3" height="3"/><rect x="12" y="1" width="3" height="3"/><rect x="1" y="12" width="3" height="3"/><rect x="12" y="12" width="3" height="3"/></g></svg><svg class="a" style="left:15.5px;top:270px;" width="16" height="16" viewBox="0 0 16 16"><g fill="none" stroke="#c4c4c4" stroke-width="1"><circle cx="8" cy="8" r="6.4"/><path d="M8 3.4V12.6M3.4 8H12.6"/><path d="M6.6 4.8L8 3.4L9.4 4.8M6.6 11.2L8 12.6L9.4 11.2M4.8 6.6L3.4 8L4.8 9.4M11.2 6.6L12.6 8L11.2 9.4"/></g><path d="M12.6 0.4H15.6V3.4ZM3.4 15.6H0.4V12.6Z" fill="#c4c4c4"/></svg>
<svg class="a" style="left:765px;top:148px;" width="110" height="110" viewBox="-20 0 110 110"><path d="M-16.0 3.0H0M-16.0 6.0H0" stroke="#8a8a8a" stroke-width="1"/><ellipse cx="36" cy="36.5" rx="4.2" ry="3" fill="#4c78d8"/><path d="M28.5 19.5L43.5 19.5L36.6 38.5L35.4 38.5Z" fill="#8ad05a"/><ellipse cx="36" cy="19.5" rx="7.5" ry="1.6" fill="#9be06a"/><rect x="29" y="39" width="14" height="6" fill="#c4c4c8"/><rect x="29" y="45" width="14" height="10.5" fill="#e6e6ea"/><path d="M27.0 48.0L9.0 41.0L9.0 55.0Z" fill="#d8d8dc"/><ellipse cx="9.5" cy="48" rx="2" ry="7" fill="#c2c2c6"/><path d="M45.0 48.0L63.0 41.5L63.0 54.5Z" fill="#e0584c"/><ellipse cx="63" cy="48" rx="2.2" ry="6.6" fill="#d2483e"/><path d="M36.0 52.0L29.0 63.0L43.0 63.0Z" fill="#9a9a9e"/><ellipse cx="36" cy="66" rx="9" ry="7" fill="#dededf"/><path d="M66.4 16.0V13.599999999999994A1.8 1.8 0 0 1 70 13.599999999999994" fill="none" stroke="#d0d0d0" stroke-width="1"/><rect x="65" y="15.400000000000006" width="6.6" height="4.4" fill="#d8d8d8"/><path d="M18.5 93.0L9.0 97.0L18.5 101.0M9.0 97.0H18.5" fill="none" stroke="#c8c8c8" stroke-width="1"/></svg><div class="t" style="left:816px;top:150.0px;height:16px;line-height:16px;font-size:13px;color:#e8e8e8;font-weight:bold;">y</div><div class="t" style="left:851px;top:187.0px;height:16px;line-height:16px;font-size:13px;color:#e8e8e8;font-weight:bold;">x</div><div class="t" style="left:807.5px;top:237.0px;height:16px;line-height:16px;letter-spacing:0.108px;font-size:13px;color:#c8ccd2;">Persp</div>
<!-- p_hier -->
<div class="a" style="left:878px;top:73px;width:612px;height:19px;background:#282828;"></div>
<div class="a" style="left:878px;top:73px;width:96px;height:19px;background:#3c3c3c;border-radius:3px 3px 0 0;"></div>
<svg class="a" style="left:886px;top:78px;" width="12" height="10" viewBox="0 0 12 10"><g fill="#c4c4c4"><rect x="0" y="0.4" width="2" height="1.6"/><rect x="1.4" y="4.2" width="2" height="1.6"/><rect x="1.4" y="8" width="2" height="1.6"/><rect x="3.4" y="0.5" width="8" height="1.4"/><rect x="4.8" y="4.3" width="6.6" height="1.4"/><rect x="4.8" y="8.1" width="6.6" height="1.4"/></g></svg>
<div class="t" style="left:902px;top:75.0px;height:16px;line-height:16px;letter-spacing:0.091px;font-size:12.5px;">Hierarchy</div>
<svg class="a" style="left:1454.5px;top:76px;" width="10" height="12" viewBox="0 0 10 12"><path d="M2.5 6V3.2A2.3 2.3 0 0 1 7 3" fill="none" stroke="#c4c4c4" stroke-width="1.2"/><rect x="1.1" y="6.1" width="7.8" height="4.8" rx="1" fill="none" stroke="#c4c4c4" stroke-width="1.2"/></svg>
<svg class="a" style="left:1475.5px;top:77.0px;" width="3" height="11" viewBox="0 0 3 11"><g fill="#c4c4c4"><rect x="0.5" y="0.3" width="2" height="2.2"/><rect x="0.5" y="4.4" width="2" height="2.2"/><rect x="0.5" y="8.5" width="2" height="2.2"/></g></svg>
<div class="a" style="left:878px;top:92px;width:612px;height:21px;background:#3c3c3c;"></div>
<div class="a" style="left:878px;top:112px;width:612px;height:1px;background:#232323;"></div>
<svg class="a" style="left:885px;top:96px;" width="12" height="12" viewBox="0 0 12 12"><path d="M6 0V12M0 6H12" stroke="#c4c4c4" stroke-width="1.8"/></svg>
<svg class="a" style="left:901.5px;top:100.0px;" width="7" height="4" viewBox="0 0 7 4"><path d="M0 0H7L3.5 4Z" fill="#c4c4c4"/></svg>
<div class="a" style="left:1161px;top:94px;width:326px;height:16px;background:#2a2a2a;border:1px solid #1c1c1c;border-radius:3px;box-sizing:border-box;"></div>
<svg class="a" style="left:1166px;top:97.6px;" width="12" height="10" viewBox="0 0 12 10"><circle cx="3.6" cy="3.8" r="2.6" fill="none" stroke="#c4c4c4" stroke-width="1.2"/><path d="M5.6 5.8L8.2 8.6" stroke="#c4c4c4" stroke-width="1.3"/><path d="M7.6 3.6H11L9.3 5.4Z" fill="#c4c4c4"/></svg>
<div class="t" style="left:1180px;top:94.2px;height:16px;line-height:16px;font-size:11.5px;color:#7a7a7a;">All</div>
<div class="a" style="left:1469.5px;top:95px;width:1px;height:14px;background:#1c1c1c;"></div>
<svg class="a" style="left:1471.5px;top:96px;" width="13" height="13" viewBox="0 0 13 13"><path d="M2.4 4.4V1H12V10.6H8.6" fill="none" stroke="#c4c4c4" stroke-width="1.1"/><rect x="0.6" y="8" width="4.4" height="4.4" fill="none" stroke="#c4c4c4" stroke-width="1.1"/><path d="M5 8L9.4 3.6M6.4 3.4H9.6V6.6" fill="none" stroke="#c4c4c4" stroke-width="1.1"/></svg>
<div class="a" style="left:878px;top:113px;width:612px;height:24.5px;background:#414141;"></div>
<svg class="a" style="left:883.5px;top:119.5px;" width="6" height="10" viewBox="0 0 6 10"><path d="M5.4 0.6L1 5L5.4 9.4" fill="none" stroke="#8a8a8a" stroke-width="1.3"/></svg>
<svg class="a" style="left:1153px;top:117.5px;" width="15" height="15" viewBox="0 0 16 16"><path d="M8 1L14.5 4.2L8 7.6L1.5 4.2Z" fill="#8fe0ff"/><path d="M1.5 4.2L8 7.6V15L1.5 11.6Z" fill="#5cc3f0"/><path d="M14.5 4.2L8 7.6V15L14.5 11.6Z" fill="#3fa6d8"/><path d="M8 1L14.5 4.2V11.6L8 15L1.5 11.6V4.2Z M1.5 4.2L8 7.6L14.5 4.2M8 7.6V15" fill="none" stroke="#bfeeff" stroke-width="0.6" stroke-linejoin="round"/></svg>
<div class="t" style="left:1170px;top:117.0px;height:16px;line-height:16px;letter-spacing:0.295px;font-size:13px;font-weight:bold;color:#d0d0d0;">Player</div>
<svg class="a" style="left:1476.0px;top:120.0px;" width="3" height="11" viewBox="0 0 3 11"><g fill="#c4c4c4"><rect x="0.5" y="0.3" width="2" height="2.2"/><rect x="0.5" y="4.4" width="2" height="2.2"/><rect x="0.5" y="8.5" width="2" height="2.2"/></g></svg>
<div class="a" style="left:878px;top:137.5px;width:612px;height:494.5px;background:#383838;"></div>
<div class="a" style="left:878px;top:137.5px;width:32px;height:494.5px;background:#323232;"></div>
<div class="a" style="left:878px;top:218px;width:612px;height:16px;background:#4d4d4d;"></div>
<div class="a" style="left:878px;top:218px;width:32px;height:16px;background:#464646;"></div>
<svg class="a" style="left:925.0px;top:143.0px;" width="9" height="7" viewBox="0 0 9 7"><path d="M0 0H9L4.5 7Z" fill="#8a8a8a"/></svg>
<svg class="a" style="left:938px;top:137.8px;" width="15.5" height="15.5" viewBox="0 0 16 16"><g fill="none" stroke="#c4c4c4" stroke-width="1.1" stroke-linejoin="round"><path d="M8 1.5L14 4.5V11.5L8 14.5L2 11.5V4.5Z"/><path d="M2 4.5L8 7.6L14 4.5M8 7.6V14.5"/></g></svg>
<div class="t" style="left:956px;top:138.0px;height:16px;line-height:16px;letter-spacing:-0.038px;font-size:12.5px;">Player</div>
<svg class="a" style="left:952px;top:153.8px;" width="15.5" height="15.5" viewBox="0 0 16 16"><g fill="none" stroke="#c4c4c4" stroke-width="1.1" stroke-linejoin="round"><path d="M8 1.5L14 4.5V11.5L8 14.5L2 11.5V4.5Z"/><path d="M2 4.5L8 7.6L14 4.5M8 7.6V14.5"/></g></svg>
<div class="t" style="left:970px;top:154.0px;height:16px;line-height:16px;letter-spacing:0.090px;font-size:12.5px;">Visor</div>
<svg class="a" style="left:952px;top:169.8px;" width="15.5" height="15.5" viewBox="0 0 16 16"><g fill="none" stroke="#c4c4c4" stroke-width="1.1" stroke-linejoin="round"><path d="M8 1.5L14 4.5V11.5L8 14.5L2 11.5V4.5Z"/><path d="M2 4.5L8 7.6L14 4.5M8 7.6V14.5"/></g></svg>
<div class="t" style="left:970px;top:170.0px;height:16px;line-height:16px;letter-spacing:-0.275px;font-size:12.5px;">Gun</div>
<svg class="a" style="left:952px;top:185.8px;" width="15.5" height="15.5" viewBox="0 0 16 16"><g fill="none" stroke="#c4c4c4" stroke-width="1.1" stroke-linejoin="round"><path d="M8 1.5L14 4.5V11.5L8 14.5L2 11.5V4.5Z"/><path d="M2 4.5L8 7.6L14 4.5M8 7.6V14.5"/></g></svg>
<div class="t" style="left:970px;top:186.0px;height:16px;line-height:16px;letter-spacing:0.028px;font-size:12.5px;">Bullet Spawn</div>
<svg class="a" style="left:939.0px;top:207.0px;" width="9" height="7" viewBox="0 0 9 7"><path d="M0 0H9L4.5 7Z" fill="#8a8a8a"/></svg>
<svg class="a" style="left:952px;top:201.8px;" width="15.5" height="15.5" viewBox="0 0 16 16"><g fill="none" stroke="#c4c4c4" stroke-width="1.1" stroke-linejoin="round"><path d="M8 1.5L14 4.5V11.5L8 14.5L2 11.5V4.5Z"/><path d="M2 4.5L8 7.6L14 4.5M8 7.6V14.5"/></g></svg>
<div class="t" style="left:970px;top:202.0px;height:16px;line-height:16px;letter-spacing:-0.135px;font-size:12.5px;">PlayerHUD</div>
<svg class="a" style="left:966px;top:217.8px;" width="15.5" height="15.5" viewBox="0 0 16 16"><g fill="none" stroke="#c4c4c4" stroke-width="1.1" stroke-linejoin="round"><path d="M8 1.5L14 4.5V11.5L8 14.5L2 11.5V4.5Z"/><path d="M2 4.5L8 7.6L14 4.5M8 7.6V14.5"/></g></svg>
<div class="t" style="left:984px;top:218.0px;height:16px;line-height:16px;letter-spacing:0.099px;font-size:12.5px;">Background</div>
<!-- p_insp -->
<div class="a" style="left:1492px;top:73px;width:428px;height:19px;background:#282828;"></div>
<div class="a" style="left:1492px;top:73px;width:95px;height:19px;background:#3c3c3c;border-radius:3px 3px 0 0;"></div>
<svg class="a" style="left:1499.5px;top:77px;" width="12" height="12" viewBox="0 0 12 12"><circle cx="6" cy="6" r="5.6" fill="#c4c4c4"/><rect x="5.2" y="5" width="1.7" height="4.4" fill="#3c3c3c"/><rect x="5.2" y="2.4" width="1.7" height="1.7" fill="#3c3c3c"/></svg>
<div class="t" style="left:1516px;top:75.0px;height:16px;line-height:16px;letter-spacing:0.210px;font-size:12.5px;">Inspector</div>
<svg class="a" style="left:1884px;top:76px;" width="10" height="12" viewBox="0 0 10 12"><path d="M2.5 6V3.2A2.3 2.3 0 0 1 7 3" fill="none" stroke="#c4c4c4" stroke-width="1.2"/><rect x="1.1" y="6.1" width="7.8" height="4.8" rx="1" fill="none" stroke="#c4c4c4" stroke-width="1.2"/></svg>
<svg class="a" style="left:1904.5px;top:77.0px;" width="3" height="11" viewBox="0 0 3 11"><g fill="#c4c4c4"><rect x="0.5" y="0.3" width="2" height="2.2"/><rect x="0.5" y="4.4" width="2" height="2.2"/><rect x="0.5" y="8.5" width="2" height="2.2"/></g></svg>
<div class="a" style="left:1492px;top:92px;width:428px;height:926px;background:#383838;"></div>
<div class="a" style="left:1492px;top:92px;width:428px;height:59px;background:#3c3c3c;"></div>
<svg class="a" style="left:1498.5px;top:101.5px;" width="23" height="23" viewBox="0 0 16 16"><g fill="none" stroke="#c4c4c4" stroke-width="1.1" stroke-linejoin="round"><path d="M8 1.5L14 4.5V11.5L8 14.5L2 11.5V4.5Z"/><path d="M2 4.5L8 7.6L14 4.5M8 7.6V14.5"/></g></svg>
<svg class="a" style="left:1519.5px;top:123.75px;" width="6" height="3.5" viewBox="0 0 6 3.5"><path d="M0 0H6L3.0 3.5Z" fill="#b0b0b0"/></svg>
<div class="a" style="left:1540px;top:103px;width:12px;height:12px;background:#2a2a2a;border:1px solid #1a1a1a;border-radius:2.5px;"><svg width="14" height="14" viewBox="0 0 14 14" style="position:absolute;left:-1px;top:-1px"><path d="M3.2 7.2L6 10L11 3.8" fill="none" stroke="#e4e4e4" stroke-width="1.6"/></svg></div>
<div class="a" style="left:1560px;top:101px;width:279px;height:18px;background:#2a2a2a;border:1px solid #1f1f1f;border-top-color:#0f0f0f;border-radius:3px;box-sizing:border-box;color:#d2d2d2;line-height:17px;padding-left:2px;white-space:nowrap;overflow:hidden;font-weight:bold;font-size:13px;">Background</div>
<div class="a" style="left:1842px;top:103px;width:12px;height:12px;background:#2a2a2a;border:1px solid #1a1a1a;border-radius:2.5px;"></div>
<div class="t" style="left:1860px;top:102.0px;height:16px;line-height:16px;letter-spacing:0.173px;font-size:12.5px;color:#9a9a9a;">Static</div>
<svg class="a" style="left:1906.5px;top:108.5px;" width="7" height="4" viewBox="0 0 7 4"><path d="M0 0H7L3.5 4Z" fill="#c4c4c4"/></svg>
<div class="t" style="left:1532.5px;top:126.0px;height:16px;line-height:16px;letter-spacing:0.216px;font-size:12.5px;color:#9a9a9a;">Tag</div>
<div class="a" style="left:1560px;top:125.5px;width:156px;height:17px;background:#515151;border:1px solid #303030;border-radius:3px;box-sizing:border-box;color:#e4e4e4;line-height:15px;padding-left:3px;white-space:nowrap;overflow:hidden;font-size:12.5px;">Untagged<svg width="7" height="4" style="position:absolute;left:145px;top:5.5px"><path d="M0 0H7L3.5 4Z" fill="#e4e4e4"/></svg></div>
<div class="t" style="left:1731px;top:126.0px;height:16px;line-height:16px;letter-spacing:0.007px;font-size:12.5px;color:#9a9a9a;">Layer</div>
<div class="a" style="left:1770.5px;top:125.5px;width:144.5px;height:17px;background:#515151;border:1px solid #303030;border-radius:3px;box-sizing:border-box;color:#e4e4e4;line-height:15px;padding-left:3px;white-space:nowrap;overflow:hidden;font-size:12.5px;">Default<svg width="7" height="4" style="position:absolute;left:133.5px;top:5.5px"><path d="M0 0H7L3.5 4Z" fill="#e4e4e4"/></svg></div>
<div class="a" style="left:1492px;top:151px;width:428px;height:1px;background:#1f1f1f;"></div><div class="a" style="left:1492px;top:152px;width:428px;height:20.5px;background:#3e3e3e;"></div><svg class="a" style="left:1498.0px;top:159.0px;" width="9" height="7" viewBox="0 0 9 7"><path d="M0 0H9L4.5 7Z" fill="#8a8a8a"/></svg><svg class="a" style="left:1513px;top:155.5px;" width="14" height="14" viewBox="0 0 14 14"><g fill="#c4c4c4"><path d="M1 1H5.4L1 5.4ZM13 1V5.4L8.6 1ZM1 13V8.6L5.4 13ZM13 13H8.6L13 8.6Z"/></g><path d="M2.4 2.4L5.4 5.4M11.6 2.4L8.6 5.4M2.4 11.6L5.4 8.6M11.6 11.6L8.6 8.6" stroke="#c4c4c4" stroke-width="1.6"/></svg><div class="t" style="left:1552px;top:154.5px;height:16px;line-height:16px;letter-spacing:0.329px;font-size:12.8px;font-weight:bold;color:#d4d4d4;">Rect Transform</div><svg class="a" style="left:1861px;top:156.5px;" width="12" height="12" viewBox="0 0 12 12"><circle cx="6" cy="6" r="5.4" fill="#c4c4c4"/><path d="M4.3 4.7A1.8 1.8 0 1 1 6.6 6.4Q6 6.7 6 7.6" fill="none" stroke="#3e3e3e" stroke-width="1.4"/><rect x="5.3" y="8.4" width="1.4" height="1.4" fill="#3e3e3e"/></svg><svg class="a" style="left:1881px;top:156.5px;" width="12" height="12" viewBox="0 0 12 12"><g stroke="#c4c4c4" stroke-width="1.2" fill="none"><path d="M0.5 3.5H6.5M9.5 3.5H11.5M0.5 8.5H2.5M5.5 8.5H11.5M8 1.2V5.8M4 6.2V10.8"/></g></svg><svg class="a" style="left:1905.5px;top:157.0px;" width="3" height="11" viewBox="0 0 3 11"><g fill="#c4c4c4"><rect x="0.5" y="0.3" width="2" height="2.2"/><rect x="0.5" y="4.4" width="2" height="2.2"/><rect x="0.5" y="8.5" width="2" height="2.2"/></g></svg>
<div class="t" style="left:1506.0px;top:180.0px;height:16px;line-height:16px;font-size:11px;width:60px;text-align:center;color:#c4c4c4;">stretch</div>
<div class="t" style="left:1476px;top:211px;width:60px;height:16px;line-height:16px;text-align:center;font-size:11px;color:#c4c4c4;transform:rotate(-90deg);">stretch</div>
<svg class="a" style="left:1518px;top:199.5px;" width="38" height="38" viewBox="0 0 38 38"><rect x="1.5" y="1.5" width="35" height="35" fill="none" stroke="#6e6e6e" stroke-width="1"/><g fill="#f0b020"><rect x="0.5" y="0.5" width="2" height="2"/><rect x="35.5" y="0.5" width="2" height="2"/><rect x="0.5" y="35.5" width="2" height="2"/><rect x="35.5" y="35.5" width="2" height="2"/></g><rect x="10.5" y="10.5" width="17" height="17" fill="none" stroke="#b4b4b4" stroke-width="1"/><g stroke="#1aa0e8" stroke-width="1.1" fill="none"><path d="M19 11.5V26.5M11.5 19H26.5"/><path d="M17 13.6L19 11.5L21 13.6M17 24.4L19 26.5L21 24.4M13.6 17L11.5 19L13.6 21M24.4 17L26.5 19L24.4 21"/></g></svg>
<div class="t" style="left:1663px;top:180.0px;height:16px;line-height:16px;letter-spacing:0.288px;font-size:12.5px;color:#c4c4c4;">Left</div>
<div class="t" style="left:1748px;top:180.0px;height:16px;line-height:16px;letter-spacing:0.449px;font-size:12.5px;color:#c4c4c4;">Top</div>
<div class="t" style="left:1834px;top:180.0px;height:16px;line-height:16px;letter-spacing:-0.229px;font-size:12.5px;color:#c4c4c4;">Pos Z</div>
<div class="a" style="left:1662.5px;top:197.5px;width:82px;height:17.5px;background:#2a2a2a;border:1px solid #1f1f1f;border-top-color:#0f0f0f;border-radius:3px;box-sizing:border-box;color:#d2d2d2;line-height:16.5px;padding-left:3px;white-space:nowrap;overflow:hidden;">0</div>
<div class="a" style="left:1747.5px;top:197.5px;width:82px;height:17.5px;background:#2a2a2a;border:1px solid #1f1f1f;border-top-color:#0f0f0f;border-radius:3px;box-sizing:border-box;color:#d2d2d2;line-height:16.5px;padding-left:3px;white-space:nowrap;overflow:hidden;">0</div>
<div class="a" style="left:1834px;top:197.5px;width:81.5px;height:17.5px;background:#2a2a2a;border:1px solid #1f1f1f;border-top-color:#0f0f0f;border-radius:3px;box-sizing:border-box;color:#d2d2d2;line-height:16.5px;padding-left:3px;white-space:nowrap;overflow:hidden;">0</div>
<div class="t" style="left:1663px;top:216.5px;height:16px;line-height:16px;letter-spacing:-0.036px;font-size:12.5px;color:#c4c4c4;">Right</div>
<div class="t" style="left:1748px;top:216.5px;height:16px;line-height:16px;letter-spacing:0.200px;font-size:12.5px;color:#c4c4c4;">Bottom</div>
<div class="a" style="left:1662.5px;top:233px;width:82px;height:17.5px;background:#2a2a2a;border:1px solid #1f1f1f;border-top-color:#0f0f0f;border-radius:3px;box-sizing:border-box;color:#d2d2d2;line-height:16.5px;padding-left:3px;white-space:nowrap;overflow:hidden;">0</div>
<div class="a" style="left:1747.5px;top:233px;width:82px;height:17.5px;background:#2a2a2a;border:1px solid #1f1f1f;border-top-color:#0f0f0f;border-radius:3px;box-sizing:border-box;color:#d2d2d2;line-height:16.5px;padding-left:3px;white-space:nowrap;overflow:hidden;">0</div>
<div class="a" style="left:1864.5px;top:232px;width:24px;height:18.5px;background:#585858;border-radius:3px 0 0 3px;"></div>
<div class="a" style="left:1889.5px;top:232px;width:25.5px;height:18.5px;background:#585858;border-radius:0 3px 3px 0;"></div>
<svg class="a" style="left:1871.5px;top:236px;" width="10" height="10" viewBox="0 0 10 10"><rect x="0.5" y="0.5" width="9" height="9" fill="none" stroke="#9a9a9a" stroke-width="1" stroke-dasharray="2 1.5"/></svg>
<div class="t" style="left:1892.0px;top:233.5px;height:16px;line-height:16px;font-size:11.5px;width:20px;text-align:center;color:#9a9a9a;">R</div>
<svg class="a" style="left:1498.5px;top:259.0px;" width="9" height="7" viewBox="0 0 9 7"><path d="M0 0H9L4.5 7Z" fill="#8a8a8a"/></svg>
<div class="t" style="left:1511px;top:254.0px;height:16px;line-height:16px;letter-spacing:0.092px;font-size:12.5px;color:#c4c4c4;">Anchors</div>
<div class="t" style="left:1526px;top:272.0px;height:16px;line-height:16px;letter-spacing:0.053px;font-size:12.5px;color:#c4c4c4;">Min</div>
<div class="t" style="left:1663px;top:272.0px;height:16px;line-height:16px;font-size:12.5px;color:#c4c4c4;">X</div><div class="a" style="left:1674.5px;top:271.5px;width:70px;height:17.5px;background:#2a2a2a;border:1px solid #1f1f1f;border-top-color:#0f0f0f;border-radius:3px;box-sizing:border-box;color:#d2d2d2;line-height:16.5px;padding-left:3px;white-space:nowrap;overflow:hidden;">0</div><div class="t" style="left:1749px;top:272.0px;height:16px;line-height:16px;font-size:12.5px;color:#c4c4c4;">Y</div><div class="a" style="left:1760.5px;top:271.5px;width:70px;height:17.5px;background:#2a2a2a;border:1px solid #1f1f1f;border-top-color:#0f0f0f;border-radius:3px;box-sizing:border-box;color:#d2d2d2;line-height:16.5px;padding-left:3px;white-space:nowrap;overflow:hidden;">0</div>
<div class="t" style="left:1526px;top:292.0px;height:16px;line-height:16px;letter-spacing:-0.038px;font-size:12.5px;color:#c4c4c4;">Max</div>
<div class="t" style="left:1663px;top:292.0px;height:16px;line-height:16px;font-size:12.5px;color:#c4c4c4;">X</div><div class="a" style="left:1674.5px;top:291.5px;width:70px;height:17.5px;background:#2a2a2a;border:1px solid #1f1f1f;border-top-color:#0f0f0f;border-radius:3px;box-sizing:border-box;color:#d2d2d2;line-height:16.5px;padding-left:3px;white-space:nowrap;overflow:hidden;">1</div><div class="t" style="left:1749px;top:292.0px;height:16px;line-height:16px;font-size:12.5px;color:#c4c4c4;">Y</div><div class="a" style="left:1760.5px;top:291.5px;width:70px;height:17.5px;background:#2a2a2a;border:1px solid #1f1f1f;border-top-color:#0f0f0f;border-radius:3px;box-sizing:border-box;color:#d2d2d2;line-height:16.5px;padding-left:3px;white-space:nowrap;overflow:hidden;">1</div>
<div class="t" style="left:1511px;top:314.0px;height:16px;line-height:16px;letter-spacing:0.102px;font-size:12.5px;color:#c4c4c4;">Pivot</div>
<div class="t" style="left:1663px;top:314.0px;height:16px;line-height:16px;font-size:12.5px;color:#c4c4c4;">X</div><div class="a" style="left:1674.5px;top:313.5px;width:70px;height:17.5px;background:#2a2a2a;border:1px solid #1f1f1f;border-top-color:#0f0f0f;border-radius:3px;box-sizing:border-box;color:#d2d2d2;line-height:16.5px;padding-left:3px;white-space:nowrap;overflow:hidden;">0.5</div><div class="t" style="left:1749px;top:314.0px;height:16px;line-height:16px;font-size:12.5px;color:#c4c4c4;">Y</div><div class="a" style="left:1760.5px;top:313.5px;width:70px;height:17.5px;background:#2a2a2a;border:1px solid #1f1f1f;border-top-color:#0f0f0f;border-radius:3px;box-sizing:border-box;color:#d2d2d2;line-height:16.5px;padding-left:3px;white-space:nowrap;overflow:hidden;">0.5</div>
<div class="t" style="left:1511px;top:342.0px;height:16px;line-height:16px;letter-spacing:0.056px;font-size:12.5px;color:#c4c4c4;">Rotation</div>
<div class="t" style="left:1666px;top:342.0px;height:16px;line-height:16px;font-size:12.5px;color:#c4c4c4;">X</div><div class="a" style="left:1681px;top:341.5px;width:64.5px;height:17.5px;background:#2a2a2a;border:1px solid #1f1f1f;border-top-color:#0f0f0f;border-radius:3px;box-sizing:border-box;color:#d2d2d2;line-height:16.5px;padding-left:3px;white-space:nowrap;overflow:hidden;">0</div><div class="t" style="left:1751px;top:342.0px;height:16px;line-height:16px;font-size:12.5px;color:#c4c4c4;">Y</div><div class="a" style="left:1766px;top:341.5px;width:64.5px;height:17.5px;background:#2a2a2a;border:1px solid #1f1f1f;border-top-color:#0f0f0f;border-radius:3px;box-sizing:border-box;color:#d2d2d2;line-height:16.5px;padding-left:3px;white-space:nowrap;overflow:hidden;">0</div><div class="t" style="left:1836px;top:342.0px;height:16px;line-height:16px;font-size:12.5px;color:#c4c4c4;">Z</div><div class="a" style="left:1851px;top:341.5px;width:64.5px;height:17.5px;background:#2a2a2a;border:1px solid #1f1f1f;border-top-color:#0f0f0f;border-radius:3px;box-sizing:border-box;color:#d2d2d2;line-height:16.5px;padding-left:3px;white-space:nowrap;overflow:hidden;">0</div>
<div class="t" style="left:1511px;top:362.0px;height:16px;line-height:16px;letter-spacing:-0.094px;font-size:12.5px;color:#c4c4c4;">Scale</div>
<div class="t" style="left:1666px;top:362.0px;height:16px;line-height:16px;font-size:12.5px;color:#c4c4c4;">X</div><div class="a" style="left:1681px;top:361.5px;width:64.5px;height:17.5px;background:#2a2a2a;border:1px solid #1f1f1f;border-top-color:#0f0f0f;border-radius:3px;box-sizing:border-box;color:#d2d2d2;line-height:16.5px;padding-left:3px;white-space:nowrap;overflow:hidden;">1</div><div class="t" style="left:1751px;top:362.0px;height:16px;line-height:16px;font-size:12.5px;color:#c4c4c4;">Y</div><div class="a" style="left:1766px;top:361.5px;width:64.5px;height:17.5px;background:#2a2a2a;border:1px solid #1f1f1f;border-top-color:#0f0f0f;border-radius:3px;box-sizing:border-box;color:#d2d2d2;line-height:16.5px;padding-left:3px;white-space:nowrap;overflow:hidden;">1</div><div class="t" style="left:1836px;top:362.0px;height:16px;line-height:16px;font-size:12.5px;color:#c4c4c4;">Z</div><div class="a" style="left:1851px;top:361.5px;width:64.5px;height:17.5px;background:#2a2a2a;border:1px solid #1f1f1f;border-top-color:#0f0f0f;border-radius:3px;box-sizing:border-box;color:#d2d2d2;line-height:16.5px;padding-left:3px;white-space:nowrap;overflow:hidden;">1</div>
<svg class="a" style="left:1643px;top:364px;" width="14" height="12" viewBox="0 0 14 12"><g fill="none" stroke="#c4c4c4" stroke-width="1.1"><path d="M5.6 3.4H4A2.6 2.6 0 0 0 4 8.6H5.6M8.4 3.4H10A2.6 2.6 0 0 1 10 8.6H8.4"/><path d="M1.6 1L12 11"/></g></svg>
<div class="a" style="left:1492px;top:388px;width:428px;height:1px;background:#1f1f1f;"></div><div class="a" style="left:1492px;top:389px;width:428px;height:20.5px;background:#3e3e3e;"></div><svg class="a" style="left:1498.0px;top:396.0px;" width="9" height="7" viewBox="0 0 9 7"><path d="M0 0H9L4.5 7Z" fill="#8a8a8a"/></svg><svg class="a" style="left:1511px;top:393px;" width="18" height="13" viewBox="0 0 18 13"><path d="M1 6.5Q9 -2.3 17 6.5Q9 15.3 1 6.5Z" fill="none" stroke="#dcdcdc" stroke-width="1.5"/><circle cx="9" cy="6.5" r="2.7" fill="none" stroke="#dcdcdc" stroke-width="1.5"/></svg><div class="t" style="left:1552px;top:391.5px;height:16px;line-height:16px;letter-spacing:0.301px;font-size:12.8px;font-weight:bold;color:#d4d4d4;">Canvas Renderer</div><svg class="a" style="left:1861px;top:393.5px;" width="12" height="12" viewBox="0 0 12 12"><circle cx="6" cy="6" r="5.4" fill="#c4c4c4"/><path d="M4.3 4.7A1.8 1.8 0 1 1 6.6 6.4Q6 6.7 6 7.6" fill="none" stroke="#3e3e3e" stroke-width="1.4"/><rect x="5.3" y="8.4" width="1.4" height="1.4" fill="#3e3e3e"/></svg><svg class="a" style="left:1881px;top:393.5px;" width="12" height="12" viewBox="0 0 12 12"><g stroke="#c4c4c4" stroke-width="1.2" fill="none"><path d="M0.5 3.5H6.5M9.5 3.5H11.5M0.5 8.5H2.5M5.5 8.5H11.5M8 1.2V5.8M4 6.2V10.8"/></g></svg><svg class="a" style="left:1905.5px;top:394.0px;" width="3" height="11" viewBox="0 0 3 11"><g fill="#c4c4c4"><rect x="0.5" y="0.3" width="2" height="2.2"/><rect x="0.5" y="4.4" width="2" height="2.2"/><rect x="0.5" y="8.5" width="2" height="2.2"/></g></svg>
<div class="t" style="left:1511px;top:415.0px;height:16px;line-height:16px;letter-spacing:0.122px;font-size:12.5px;color:#c4c4c4;">Cull Transparent Mesh</div>
<div class="a" style="left:1665.5px;top:416px;width:12px;height:12px;background:#2a2a2a;border:1px solid #1a1a1a;border-radius:2.5px;"><svg width="14" height="14" viewBox="0 0 14 14" style="position:absolute;left:-1px;top:-1px"><path d="M3.2 7.2L6 10L11 3.8" fill="none" stroke="#e4e4e4" stroke-width="1.6"/></svg></div>
<div class="a" style="left:1492px;top:441px;width:428px;height:1px;background:#1f1f1f;"></div><div class="a" style="left:1492px;top:442px;width:428px;height:20.5px;background:#3e3e3e;"></div><svg class="a" style="left:1498.0px;top:449.0px;" width="9" height="7" viewBox="0 0 9 7"><path d="M0 0H9L4.5 7Z" fill="#8a8a8a"/></svg><svg class="a" style="left:1512.5px;top:445px;" width="15" height="14" viewBox="0 0 15 14"><rect x="2" y="2" width="11" height="10" fill="none" stroke="#c4c4c4" stroke-width="1.1"/><path d="M3.2 10.8L4.6 8.6L6.4 9.4L9.6 6.4L11.8 8.4V10.8Z" fill="#c4c4c4"/><circle cx="5.2" cy="5.4" r="1.3" fill="#c4c4c4"/><g fill="#c4c4c4"><rect x="0" y="0" width="3" height="1.2"/><rect x="0" y="0" width="1.2" height="3"/><rect x="12" y="0" width="3" height="1.2"/><rect x="13.8" y="0" width="1.2" height="3"/><rect x="0" y="12.8" width="3" height="1.2"/><rect x="0" y="11" width="1.2" height="3"/><rect x="12" y="12.8" width="3" height="1.2"/><rect x="13.8" y="11" width="1.2" height="3"/></g></svg><div class="a" style="left:1532.5px;top:445.5px;width:11.5px;height:11.5px;background:#2a2a2a;border:1px solid #1a1a1a;border-radius:2.5px;"><svg width="13.5" height="13.5" viewBox="0 0 14 14" style="position:absolute;left:-1px;top:-1px"><path d="M3.2 7.2L6 10L11 3.8" fill="none" stroke="#e4e4e4" stroke-width="1.6"/></svg></div><div class="t" style="left:1552px;top:444.5px;height:16px;line-height:16px;letter-spacing:0.202px;font-size:12.8px;font-weight:bold;color:#d4d4d4;">Image</div><svg class="a" style="left:1861px;top:446.5px;" width="12" height="12" viewBox="0 0 12 12"><circle cx="6" cy="6" r="5.4" fill="#c4c4c4"/><path d="M4.3 4.7A1.8 1.8 0 1 1 6.6 6.4Q6 6.7 6 7.6" fill="none" stroke="#3e3e3e" stroke-width="1.4"/><rect x="5.3" y="8.4" width="1.4" height="1.4" fill="#3e3e3e"/></svg><svg class="a" style="left:1881px;top:446.5px;" width="12" height="12" viewBox="0 0 12 12"><g stroke="#c4c4c4" stroke-width="1.2" fill="none"><path d="M0.5 3.5H6.5M9.5 3.5H11.5M0.5 8.5H2.5M5.5 8.5H11.5M8 1.2V5.8M4 6.2V10.8"/></g></svg><svg class="a" style="left:1905.5px;top:447.0px;" width="3" height="11" viewBox="0 0 3 11"><g fill="#c4c4c4"><rect x="0.5" y="0.3" width="2" height="2.2"/><rect x="0.5" y="4.4" width="2" height="2.2"/><rect x="0.5" y="8.5" width="2" height="2.2"/></g></svg>
<div class="t" style="left:1511px;top:468.0px;height:16px;line-height:16px;letter-spacing:-0.001px;font-size:12.5px;color:#c4c4c4;">Source Image</div>
<div class="t" style="left:1511px;top:488.0px;height:16px;line-height:16px;letter-spacing:0.086px;font-size:12.5px;color:#c4c4c4;">Color</div>
<div class="t" style="left:1511px;top:508.0px;height:16px;line-height:16px;letter-spacing:0.106px;font-size:12.5px;color:#c4c4c4;">Material</div>
<div class="t" style="left:1511px;top:528.0px;height:16px;line-height:16px;letter-spacing:0.205px;font-size:12.5px;color:#c4c4c4;">Raycast Target</div>
<div class="t" style="left:1511px;top:548.0px;height:16px;line-height:16px;letter-spacing:0.020px;font-size:12.5px;color:#c4c4c4;">Raycast Padding</div>
<div class="t" style="left:1511px;top:570.0px;height:16px;line-height:16px;letter-spacing:0.063px;font-size:12.5px;color:#c4c4c4;">Maskable</div>
<svg class="a" style="left:1501.0px;top:552.5px;" width="5" height="8" viewBox="0 0 5 8"><path d="M0 0L5 4.0L0 8Z" fill="#8a8a8a"/></svg>
<div class="a" style="left:1665.5px;top:467.5px;width:249px;height:17.5px;background:#2a2a2a;border:1px solid #1f1f1f;border-top-color:#0f0f0f;border-radius:3px;box-sizing:border-box;color:#d2d2d2;line-height:16.5px;padding-left:3px;white-space:nowrap;overflow:hidden;">None (Sprite)</div>
<div class="a" style="left:1665.5px;top:487.5px;width:249px;height:17.5px;background:#2a2a2a;border:1px solid #1f1f1f;border-top-color:#0f0f0f;border-radius:3px;box-sizing:border-box;color:#d2d2d2;line-height:16.5px;padding-left:3px;white-space:nowrap;overflow:hidden;"></div>
<div class="a" style="left:1665.5px;top:488px;width:229px;height:13.5px;background:linear-gradient(#8a8a8a,#9a9a9a);border-radius:2px 0 0 0;"></div>
<div class="a" style="left:1665.5px;top:501.5px;width:229px;height:3px;background:#ffffff;"></div>
<div class="a" style="left:1665.5px;top:507.5px;width:249px;height:17.5px;background:#2a2a2a;border:1px solid #1f1f1f;border-top-color:#0f0f0f;border-radius:3px;box-sizing:border-box;color:#d2d2d2;line-height:16.5px;padding-left:3px;white-space:nowrap;overflow:hidden;">None (Material)</div>
<div class="a" style="left:1665.5px;top:529px;width:12px;height:12px;background:#2a2a2a;border:1px solid #1a1a1a;border-radius:2.5px;"><svg width="14" height="14" viewBox="0 0 14 14" style="position:absolute;left:-1px;top:-1px"><path d="M3.2 7.2L6 10L11 3.8" fill="none" stroke="#e4e4e4" stroke-width="1.6"/></svg></div>
<div class="a" style="left:1665.5px;top:571px;width:12px;height:12px;background:#2a2a2a;border:1px solid #1a1a1a;border-radius:2.5px;"><svg width="14" height="14" viewBox="0 0 14 14" style="position:absolute;left:-1px;top:-1px"><path d="M3.2 7.2L6 10L11 3.8" fill="none" stroke="#e4e4e4" stroke-width="1.6"/></svg></div>
<div class="a" style="left:1492px;top:595px;width:428px;height:1px;background:#1f1f1f;"></div>
<div class="a" style="left:1492px;top:596px;width:428px;height:54.5px;background:#3d3d3d;"></div>
<div class="a" style="left:1508.5px;top:602.5px;width:31px;height:31px;background:#414141;"></div>
<div class="a" style="left:1512px;top:606px;width:24px;height:24px;background:#ffffff;"></div>
<div class="t" style="left:1548px;top:601.5px;height:16px;line-height:16px;letter-spacing:0.301px;font-size:13.3px;color:#9a9a9a;">Default UI Material (Material)</div>
<svg class="a" style="left:1499.25px;top:634.75px;" width="7.5" height="9.5" viewBox="0 0 7.5 9.5"><path d="M0 0L7.5 4.75L0 9.5Z" fill="#6e6e6e"/></svg>
<div class="t" style="left:1545.5px;top:627.5px;height:16px;line-height:16px;letter-spacing:-0.134px;font-size:12.5px;color:#7a7a7a;">Shader</div>
<div class="a" style="left:1597px;top:627px;width:318px;height:16.5px;background:#484848;border:1px solid #303030;border-radius:3px;box-sizing:border-box;color:#8a8a8a;line-height:14.5px;padding-left:3px;white-space:nowrap;overflow:hidden;font-size:12.5px;">UI/Default<svg width="7" height="4" style="position:absolute;left:307px;top:5.25px"><path d="M0 0H7L3.5 4Z" fill="#8a8a8a"/></svg></div>
<svg class="a" style="left:1911.5px;top:604.0px;" width="3" height="11" viewBox="0 0 3 11"><g fill="#8a8a8a"><rect x="0.5" y="0.3" width="2" height="2.2"/><rect x="0.5" y="4.4" width="2" height="2.2"/><rect x="0.5" y="8.5" width="2" height="2.2"/></g></svg>
<div class="a" style="left:1492px;top:650.5px;width:428px;height:1px;background:#1f1f1f;"></div>
<div class="a" style="left:1492px;top:661px;width:428px;height:1px;background:#2a2a2a;"></div>
<div class="a" style="left:1592px;top:671px;width:230px;height:22.5px;background:#585858;border:1px solid #303030;border-radius:3px;box-sizing:border-box;text-align:center;line-height:20px;color:#e4e4e4;font-size:12.5px;">Add Component</div>
<div class="a" style="left:1492px;top:836px;width:428px;height:1px;background:#1f1f1f;"></div>
<div class="a" style="left:1492px;top:837px;width:428px;height:20.5px;background:#3c3c3c;"></div>
<div class="a" style="left:1492px;top:857.5px;width:428px;height:1px;background:#1f1f1f;"></div>
<div class="a" style="left:1492px;top:858.5px;width:428px;height:152.5px;background:#323232;"></div>
<div class="t" style="left:1500px;top:839.0px;height:16px;line-height:16px;letter-spacing:0.083px;font-size:12.8px;font-weight:bold;color:#d4d4d4;">Background</div>
<svg class="a" style="left:1579.0px;top:845.5px;" width="7" height="4" viewBox="0 0 7 4"><path d="M0 0H7L3.5 4Z" fill="#c4c4c4"/></svg>
<div class="a" style="left:1595px;top:845.5px;width:310px;height:1px;background:#6a6a6a;"></div><div class="a" style="left:1595px;top:848.5px;width:310px;height:1px;background:#6a6a6a;"></div>
<svg class="a" style="left:1911.0px;top:841.5px;" width="3" height="11" viewBox="0 0 3 11"><g fill="#c4c4c4"><rect x="0.5" y="0.3" width="2" height="2.2"/><rect x="0.5" y="4.4" width="2" height="2.2"/><rect x="0.5" y="8.5" width="2" height="2.2"/></g></svg>
<div class="t" style="left:1555.8px;top:977.5px;height:16px;line-height:16px;font-size:13.1px;width:300px;text-align:center;text-shadow:0 1px 1px #000,0 0 2px #000;font-weight:bold;color:#e8e8e8;">Background</div>
<div class="t" style="left:1556.0px;top:992.0px;height:16px;line-height:16px;font-size:12.6px;width:300px;text-align:center;text-shadow:0 1px 1px #000,0 0 2px #000;font-weight:bold;color:#e8e8e8;letter-spacing:0.55px;">Image Size: 0x0</div>
<div class="a" style="left:1492px;top:1011px;width:428px;height:1px;background:#1f1f1f;"></div>
<div class="a" style="left:1492px;top:1012px;width:428px;height:6px;background:#3c3c3c;"></div>
<!-- p_game -->
<div class="a" style="left:0px;top:634px;width:876px;height:18.5px;background:#282828;"></div>
<div class="a" style="left:88px;top:634px;width:74px;height:18.5px;background:#3c3c3c;border-radius:3px 3px 0 0;"></div>
<svg class="a" style="left:7.5px;top:638px;" width="11" height="12" viewBox="0 0 11 12"><rect x="0.3" y="0.3" width="10.4" height="11.4" rx="1.2" fill="#c4c4c4"/><path d="M2 3H9M2 5.4H9M2 7.8H9M2 10.2H6" stroke="#282828" stroke-width="1.1"/></svg>
<div class="t" style="left:23px;top:636.0px;height:16px;line-height:16px;letter-spacing:-0.008px;font-size:12.5px;">Console</div>
<svg class="a" style="left:94px;top:640px;" width="14" height="8" viewBox="0 0 14 8"><rect x="0.3" y="0.3" width="13.4" height="7.4" rx="3.7" fill="#c4c4c4"/><path d="M3.8 2.2V5.8M2 4H5.6" stroke="#3c3c3c" stroke-width="1.1"/><circle cx="9.4" cy="4.8" r="0.9" fill="#3c3c3c"/><circle cx="11.4" cy="3.2" r="0.9" fill="#3c3c3c"/></svg>
<div class="t" style="left:111px;top:636.0px;height:16px;line-height:16px;letter-spacing:-0.309px;font-size:12.5px;">Game</div>
<svg class="a" style="left:171px;top:638px;" width="12" height="12" viewBox="0 0 12 12"><circle cx="6" cy="6" r="5.7" fill="#c4c4c4"/><path d="M6 2.4V6.4H9.6" fill="none" stroke="#282828" stroke-width="1.3"/></svg>
<div class="t" style="left:187.5px;top:636.0px;height:16px;line-height:16px;letter-spacing:-0.009px;font-size:12.5px;">Animation</div>
<svg class="a" style="left:861.5px;top:638.0px;" width="3" height="11" viewBox="0 0 3 11"><g fill="#c4c4c4"><rect x="0.5" y="0.3" width="2" height="2.2"/><rect x="0.5" y="4.4" width="2" height="2.2"/><rect x="0.5" y="8.5" width="2" height="2.2"/></g></svg>
<div class="a" style="left:0px;top:652.5px;width:876px;height:21px;background:#3c3c3c;"></div>
<div class="a" style="left:0px;top:673px;width:876px;height:1px;background:#232323;"></div>
<div class="a" style="left:90px;top:653px;width:1px;height:20px;background:#2a2a2a;"></div>
<div class="a" style="left:176px;top:653px;width:1px;height:20px;background:#2a2a2a;"></div>
<div class="a" style="left:336px;top:653px;width:1px;height:20px;background:#2a2a2a;"></div>
<div class="a" style="left:578px;top:653px;width:1px;height:20px;background:#2a2a2a;"></div>
<div class="a" style="left:688px;top:653px;width:1px;height:20px;background:#2a2a2a;"></div>
<div class="a" style="left:714.5px;top:653px;width:1px;height:20px;background:#2a2a2a;"></div>
<div class="a" style="left:740px;top:653px;width:1px;height:20px;background:#2a2a2a;"></div>
<div class="a" style="left:766px;top:653px;width:1px;height:20px;background:#2a2a2a;"></div>
<div class="a" style="left:806px;top:653px;width:1px;height:20px;background:#2a2a2a;"></div>
<div class="a" style="left:858px;top:653px;width:1px;height:20px;background:#2a2a2a;"></div>
<div class="t" style="left:4px;top:655.0px;height:16px;line-height:16px;letter-spacing:-0.259px;font-size:12.5px;">Game</div>
<svg class="a" style="left:78.0px;top:661.5px;" width="7" height="4" viewBox="0 0 7 4"><path d="M0 0H7L3.5 4Z" fill="#c4c4c4"/></svg>
<div class="t" style="left:100px;top:655.0px;height:16px;line-height:16px;letter-spacing:-0.156px;font-size:12.5px;">Display 1</div>
<svg class="a" style="left:164.5px;top:661.5px;" width="7" height="4" viewBox="0 0 7 4"><path d="M0 0H7L3.5 4Z" fill="#c4c4c4"/></svg>
<div class="t" style="left:180.5px;top:655.0px;height:16px;line-height:16px;letter-spacing:0.100px;font-size:12.5px;">Free Aspect</div>
<svg class="a" style="left:324.0px;top:661.5px;" width="7" height="4" viewBox="0 0 7 4"><path d="M0 0H7L3.5 4Z" fill="#c4c4c4"/></svg>
<div class="t" style="left:343px;top:655.0px;height:16px;line-height:16px;letter-spacing:-0.094px;font-size:12.5px;">Scale</div>
<div class="a" style="left:389px;top:663px;width:142px;height:1px;background:#5e5e5e;"></div>
<div class="a" style="left:381px;top:658.5px;width:10px;height:10px;background:#999999;border-radius:50%;"></div>
<div class="t" style="left:537px;top:655.0px;height:16px;line-height:16px;letter-spacing:-0.701px;font-size:12.5px;">1x</div>
<div class="t" style="left:582px;top:655.0px;height:16px;line-height:16px;letter-spacing:-0.019px;font-size:12.5px;">Play Focused</div>
<svg class="a" style="left:676.0px;top:661.5px;" width="7" height="4" viewBox="0 0 7 4"><path d="M0 0H7L3.5 4Z" fill="#c4c4c4"/></svg>
<svg class="a" style="left:694px;top:656px;" width="14" height="15" viewBox="0 0 14 15"><ellipse cx="7" cy="9" rx="3.8" ry="4.6" fill="#c4c4c4"/><path d="M4 4.6A3 3 0 0 1 10 4.6Z" fill="#c4c4c4"/><path d="M3.4 7L0.8 5.4M3.2 9.4H0.4M3.6 11.6L1 13.6M10.6 7L13.2 5.4M10.8 9.4H13.6M10.4 11.6L13 13.6M4.6 2.6L3.4 0.8M9.4 2.6L10.6 0.8" stroke="#c4c4c4" stroke-width="1.1" fill="none"/><path d="M4 7.4H10M4 10.4H10" stroke="#3c3c3c" stroke-width="0.9"/></svg>
<svg class="a" style="left:720px;top:657px;" width="14" height="13" viewBox="0 0 14 13"><path d="M0.6 4H2.6V9H0.6ZM3.4 4L7 1V12L3.4 9Z" fill="#c4c4c4"/><path d="M4.6 1.4V11.6" stroke="#3c3c3c" stroke-width="0.8"/><path d="M8.8 4.6Q10 6.5 8.8 8.4M10.8 3Q13 6.5 10.8 10" fill="none" stroke="#c4c4c4" stroke-width="1.1"/></svg>
<svg class="a" style="left:746px;top:658.5px;" width="14" height="10" viewBox="0 0 14 10"><rect x="0.5" y="0.5" width="13" height="9" fill="none" stroke="#c4c4c4" stroke-width="1.1"/><path d="M2 3H12M2 5H12" stroke="#c4c4c4" stroke-width="1.2" stroke-dasharray="1.3 1"/><path d="M3.4 7.4H10.6" stroke="#c4c4c4" stroke-width="1.2"/></svg>
<div class="t" style="left:771.5px;top:655.0px;height:16px;line-height:16px;letter-spacing:0.163px;font-size:12.5px;">Stats</div>
<div class="t" style="left:810px;top:655.0px;height:16px;line-height:16px;letter-spacing:-0.061px;font-size:12.5px;">Gizmos</div>
<svg class="a" style="left:863.5px;top:661.5px;" width="7" height="4" viewBox="0 0 7 4"><path d="M0 0H7L3.5 4Z" fill="#c4c4c4"/></svg>
<svg class="a" style="left:0px;top:674px;overflow:hidden;" width="876" height="344" viewBox="0 0 876 344"><rect width="876" height="344" fill="#6b6460"/><path d="M92.7 -1.0L177.1 -1.0L-15.0 345.0L-161.4 345.0Z" fill="#f3f3f2" /><path d="M177.1 -1.0L189.5 -1.0L6.6 345.0L-15.0 345.0Z" fill="#cdd1d5" /><path d="M189.5 -1.0L247.0 -1.0L106.4 345.0L6.6 345.0Z" fill="#c3c8cd" /><path d="M247.0 -1.0L542.8 -1.0L619.9 345.0L106.4 345.0Z" fill="#f2f2f1" /><path d="M542.8 -1.0L565.7 -1.0L659.8 345.0L619.9 345.0Z" fill="#6c87b1" /><path d="M565.7 -1.0L611.6 -1.0L739.5 345.0L659.8 345.0Z" fill="#7a899c" /><path d="M611.6 -1.0L696.2 -1.0L886.2 345.0L739.5 345.0Z" fill="#f3f3f2" /><clipPath id="cl"><path d="M92.7 -1L177.1 -1L-15.0 345L-161.4 345Z"/></clipPath><g fill="none" stroke="#868686" stroke-opacity="0.8" stroke-width="1.3" stroke-dasharray="7 0.8"><path d="M-179.8 370.0L-6.6 370.0M-149.7 329.0L15.1 329.0M-122.3 291.8L34.7 291.8M-97.4 257.9L52.7 257.9M-74.6 226.8L69.1 226.8M-53.7 198.3L84.1 198.3M-34.4 172.1L98.0 172.1M-16.6 147.8L110.9 147.8M-0.0 125.3L122.8 125.3M15.3 104.4L133.8 104.4M29.7 84.9L144.1 84.9M43.0 66.6L153.8 66.6M55.6 49.6L162.8 49.6M67.4 33.5L171.3 33.5M78.4 18.5L179.2 18.5M88.9 4.3L186.7 4.3M98.7 -9.1L193.8 -9.1M108.0 -21.8L200.5 -21.8M116.8 -33.7L206.8 -33.7M157.1 -1.0L-49.7 345.0M137.1 -1.0L-84.3 345.0M117.2 -1.0L-119.0 345.0M97.2 -1.0L-153.6 345.0"/><path d="M748.7 370.0L899.9 370.0M733.5 329.0L877.4 329.0M719.8 291.8L857.0 291.8M707.3 257.9L838.3 257.9M695.8 226.8L821.3 226.8M685.3 198.3L805.6 198.3M675.6 172.1L791.2 172.1M666.6 147.8L777.9 147.8M658.3 125.3L765.5 125.3M650.6 104.4L754.0 104.4M643.4 84.9L743.3 84.9M636.6 66.6L733.3 66.6M630.3 49.6L723.9 49.6M624.4 33.5L715.1 33.5M618.8 18.5L706.8 18.5M613.6 4.3L699.1 4.3M608.6 -9.1L691.7 -9.1M604.0 -21.8L684.7 -21.8M599.5 -33.7L678.2 -33.7M631.6 -1.0L774.1 345.0M651.5 -1.0L808.8 345.0M671.5 -1.0L843.4 345.0M691.5 -1.0L878.1 345.0"/></g><path d="M-6.6 370.0L101.6 356.9M15.1 329.0L114.1 326.0M34.7 291.8L125.8 297.2M52.7 257.9L136.7 270.5M69.1 226.8L146.8 245.6M84.1 198.3L156.3 222.3M98.0 172.1L165.1 200.5M110.9 147.8L173.5 180.0M122.8 125.3L181.3 160.7M133.8 104.4L188.7 142.5M144.1 84.9L195.6 125.4M153.8 66.6L202.2 109.2M162.8 49.6L208.5 93.8M171.3 33.5L214.4 79.2M179.2 18.5L220.0 65.4M186.7 4.3L225.4 52.2M193.8 -9.1L230.5 39.7M200.5 -21.8L235.3 27.8M206.8 -33.7L240.0 16.4M203.9 -1.0L31.6 345.0M218.3 -1.0L56.5 345.0M232.6 -1.0L81.5 345.0" fill="none" stroke="#8b9096" stroke-opacity="0.85" stroke-width="1.1"/><path d="M748.7 370.0L662.5 355.0M733.5 329.0L654.5 325.5M719.8 291.8L647.0 298.0M707.3 257.9L640.0 272.4M695.8 226.8L633.5 248.4M685.3 198.3L627.4 225.9M675.6 172.1L621.6 204.8M666.6 147.8L616.2 184.9M658.3 125.3L611.1 166.1M650.6 104.4L606.3 148.4M643.4 84.9L601.8 131.7M636.6 66.6L597.5 115.8M630.3 49.6L593.4 100.7M624.4 33.5L589.5 86.4M618.8 18.5L585.8 72.8M613.6 4.3L582.3 59.9M608.6 -9.1L578.9 47.5M604.0 -21.8L575.7 35.7M599.5 -33.7L572.6 24.5M577.2 -1.0L679.7 345.0M588.7 -1.0L699.6 345.0M600.2 -1.0L719.5 345.0" fill="none" stroke="#5d6b7d" stroke-opacity="0.9" stroke-width="1.1"/><path d="M177.1 -1.0L-15.0 345.0M189.5 -1.0L6.6 345.0" stroke="#b4b9bf" stroke-width="1" fill="none"/><clipPath id="ci"><path d="M247.0 -1L565.7 -1L659.8 345L106.4 345Z"/></clipPath><g clip-path="url(#ci)" fill="none"><path d="M120.0 311.6L650.7 311.6M167.9 193.6L618.6 193.6M203.3 106.5L594.9 106.5M230.5 39.6L576.8 39.6M285.5 -1.0L173.2 345.0M362.4 -1.0L306.8 345.0M439.3 -1.0L440.3 345.0M516.3 -1.0L573.9 345.0M593.2 -1.0L707.5 345.0" stroke="#e6e6e5" stroke-width="1"/><path d="M241.9 11.6L572.2 11.6M218.3 69.7L587.9 69.7M187.4 145.7L608.6 145.7M145.9 247.8L636.3 247.8M323.9 -1.0L240.0 345.0M400.9 -1.0L373.6 345.0M477.8 -1.0L507.1 345.0M554.8 -1.0L640.7 345.0" stroke="#adaeab" stroke-width="1.5"/><path d="M241.9 11.6L572.2 11.6M218.3 69.7L587.9 69.7M187.4 145.7L608.6 145.7M145.9 247.8L636.3 247.8M323.9 -1.0L240.0 345.0M400.9 -1.0L373.6 345.0M477.8 -1.0L507.1 345.0M554.8 -1.0L640.7 345.0" stroke="#a6a7a4" stroke-width="2.7" stroke-dasharray="7 11"/></g><path d="M542.8 -1.0L565.7 -1.0L659.8 345.0L619.9 345.0Z" fill="#6c87b1" /><clipPath id="cs"><path d="M542.8 -1L565.7 -1L659.8 345L619.9 345Z"/></clipPath><g clip-path="url(#cs)" fill="none"><path d="M241.9 11.6L572.2 11.6M218.3 69.7L587.9 69.7M187.4 145.7L608.6 145.7M145.9 247.8L636.3 247.8M323.9 -1.0L240.0 345.0M400.9 -1.0L373.6 345.0M477.8 -1.0L507.1 345.0M554.8 -1.0L640.7 345.0" stroke="#4f668c" stroke-width="1.6"/><path d="M241.9 11.6L572.2 11.6M218.3 69.7L587.9 69.7M187.4 145.7L608.6 145.7M145.9 247.8L636.3 247.8M323.9 -1.0L240.0 345.0M400.9 -1.0L373.6 345.0M477.8 -1.0L507.1 345.0M554.8 -1.0L640.7 345.0" stroke="#4a6186" stroke-width="3" stroke-dasharray="9 8"/></g><path d="M542.8 -1.0L619.9 345.0" stroke="#c3cee1" stroke-width="6" fill="none" stroke-opacity="0.9"/><path d="M544.0 -1.0L622.0 345.0" stroke="#93a9cb" stroke-width="3" fill="none"/><path d="M608.1 309.8L636.3 345.0L613.9 345.0Z" fill="#f2f2f1"/><path d="M612.1 309.8L636.3 345.0" stroke="#b4c2da" stroke-width="3" fill="none"/><g clip-path="url(#ci)"><text x="244.9" y="8.6" font-size="3.7" font-family="Liberation Mono" font-style="italic" fill="#9a9b98">1METER</text><text x="323.9" y="8.6" font-size="3.7" font-family="Liberation Mono" font-style="italic" fill="#9a9b98">1METER</text><text x="402.9" y="8.6" font-size="3.7" font-family="Liberation Mono" font-style="italic" fill="#9a9b98">1METER</text><text x="481.9" y="8.6" font-size="3.7" font-family="Liberation Mono" font-style="italic" fill="#9a9b98">1METER</text><text x="560.9" y="8.6" font-size="3.7" font-family="Liberation Mono" font-style="italic" fill="#9a9b98">1METER</text><text x="221.3" y="66.7" font-size="4.0" font-family="Liberation Mono" font-style="italic" fill="#9a9b98">1METER</text><text x="309.8" y="66.7" font-size="4.0" font-family="Liberation Mono" font-style="italic" fill="#9a9b98">1METER</text><text x="398.3" y="66.7" font-size="4.0" font-family="Liberation Mono" font-style="italic" fill="#9a9b98">1METER</text><text x="486.8" y="66.7" font-size="4.0" font-family="Liberation Mono" font-style="italic" fill="#9a9b98">1METER</text><text x="575.3" y="66.7" font-size="4.0" font-family="Liberation Mono" font-style="italic" fill="#9a9b98">1METER</text><text x="190.4" y="142.7" font-size="4.5" font-family="Liberation Mono" font-style="italic" fill="#9a9b98">1METER</text><text x="291.3" y="142.7" font-size="4.5" font-family="Liberation Mono" font-style="italic" fill="#9a9b98">1METER</text><text x="392.3" y="142.7" font-size="4.5" font-family="Liberation Mono" font-style="italic" fill="#9a9b98">1METER</text><text x="493.2" y="142.7" font-size="4.5" font-family="Liberation Mono" font-style="italic" fill="#9a9b98">1METER</text><text x="594.2" y="142.7" font-size="4.5" font-family="Liberation Mono" font-style="italic" fill="#9a9b98">1METER</text><text x="148.9" y="244.8" font-size="5.2" font-family="Liberation Mono" font-style="italic" fill="#9a9b98">1METER</text><text x="266.6" y="244.8" font-size="5.2" font-family="Liberation Mono" font-style="italic" fill="#9a9b98">1METER</text><text x="384.2" y="244.8" font-size="5.2" font-family="Liberation Mono" font-style="italic" fill="#9a9b98">1METER</text><text x="501.9" y="244.8" font-size="5.2" font-family="Liberation Mono" font-style="italic" fill="#9a9b98">1METER</text><text x="619.6" y="244.8" font-size="5.2" font-family="Liberation Mono" font-style="italic" fill="#9a9b98">1METER</text></g></svg>
<div class="a" style="left:15px;top:703.7px;width:200px;height:200px;background:rgba(58,58,58,0.41);"></div>
<div class="a" style="left:36.5px;top:720.3px;width:157.2px;height:27.2px;background:#f5f5f5;border-radius:3px;text-align:center;color:#323232;font-size:23.5px;line-height:30px;overflow:hidden;">Host</div>
<div class="a" style="left:36.5px;top:767.5px;width:157.2px;height:27.2px;background:#f5f5f5;border-radius:3px;text-align:center;color:#323232;font-size:23.5px;line-height:30px;overflow:hidden;">Client</div>
<div class="t" style="left:15.799999999999997px;top:823.6px;height:28px;line-height:28px;font-size:23.5px;width:200px;text-align:center;color:#ffffff;">Players: 0</div>
<div class="a" style="left:0px;top:1017.5px;width:876px;height:0.5px;background:#191919;"></div>
<!-- p_proj -->
<div class="a" style="left:878px;top:634px;width:612px;height:18.5px;background:#282828;"></div>
<div class="a" style="left:878px;top:634px;width:80px;height:18.5px;background:#3c3c3c;border-radius:3px 3px 0 0;"></div>
<svg class="a" style="left:885.5px;top:638.5px;" width="13" height="11" viewBox="0 0 13 11"><path d="M0.5 10.5V0.6H5L6.2 2.2H12.4V10.5Z" fill="#c4c4c4"/></svg>
<div class="t" style="left:902px;top:636.0px;height:16px;line-height:16px;letter-spacing:0.185px;font-size:12.5px;">Project</div>
<svg class="a" style="left:1454.5px;top:637px;" width="10" height="12" viewBox="0 0 10 12"><path d="M2.5 6V3.2A2.3 2.3 0 0 1 7 3" fill="none" stroke="#c4c4c4" stroke-width="1.2"/><rect x="1.1" y="6.1" width="7.8" height="4.8" rx="1" fill="none" stroke="#c4c4c4" stroke-width="1.2"/></svg>
<svg class="a" style="left:1475.5px;top:638.0px;" width="3" height="11" viewBox="0 0 3 11"><g fill="#c4c4c4"><rect x="0.5" y="0.3" width="2" height="2.2"/><rect x="0.5" y="4.4" width="2" height="2.2"/><rect x="0.5" y="8.5" width="2" height="2.2"/></g></svg>
<div class="a" style="left:878px;top:652.5px;width:612px;height:21px;background:#3c3c3c;"></div>
<div class="a" style="left:878px;top:673px;width:612px;height:1px;background:#232323;"></div>
<svg class="a" style="left:885px;top:657px;" width="12" height="12" viewBox="0 0 12 12"><path d="M6 0V12M0 6H12" stroke="#c4c4c4" stroke-width="1.8"/></svg>
<svg class="a" style="left:901.5px;top:661.0px;" width="7" height="4" viewBox="0 0 7 4"><path d="M0 0H7L3.5 4Z" fill="#c4c4c4"/></svg>
<div class="a" style="left:1024.5px;top:655px;width:318px;height:16px;background:#2a2a2a;border:1px solid #1c1c1c;border-radius:3px;box-sizing:border-box;"></div>
<svg class="a" style="left:1028.5px;top:658.5px;" width="9" height="9" viewBox="0 0 9 9"><circle cx="3.4" cy="3.4" r="2.4" fill="none" stroke="#c4c4c4" stroke-width="1.2"/><path d="M5.2 5.2L8 8" stroke="#c4c4c4" stroke-width="1.3"/></svg>
<div class="a" style="left:1324.5px;top:656.5px;width:1px;height:13.5px;background:#1c1c1c;"></div>
<svg class="a" style="left:1326.5px;top:657px;" width="13" height="13" viewBox="0 0 13 13"><path d="M2.4 4.4V1H12V10.6H8.6" fill="none" stroke="#c4c4c4" stroke-width="1.1"/><rect x="0.6" y="8" width="4.4" height="4.4" fill="none" stroke="#c4c4c4" stroke-width="1.1"/><path d="M5 8L9.4 3.6M6.4 3.4H9.6V6.6" fill="none" stroke="#c4c4c4" stroke-width="1.1"/></svg>
<div class="a" style="left:1344px;top:653px;width:1px;height:20px;background:#2e2e2e;"></div>
<div class="a" style="left:1370px;top:653px;width:1px;height:20px;background:#2e2e2e;"></div>
<div class="a" style="left:1396px;top:653px;width:1px;height:20px;background:#2e2e2e;"></div>
<div class="a" style="left:1422px;top:653px;width:1px;height:20px;background:#2e2e2e;"></div>
<div class="a" style="left:1448px;top:653px;width:1px;height:20px;background:#2e2e2e;"></div>
<svg class="a" style="left:1350.5px;top:657px;" width="13" height="12" viewBox="0 0 13 12"><rect x="1.6" y="0.4" width="4.8" height="4.6" fill="#c4c4c4"/><circle cx="3.8" cy="8.6" r="3.2" fill="#c4c4c4"/><path d="M9 2.4L12.6 8.8H5.6Z" fill="#c4c4c4"/></svg>
<svg class="a" style="left:1376px;top:658px;" width="13" height="11" viewBox="0 0 13 11"><path d="M0.6 5.2L6 0.6H12.4V6.4L7 10.6Z" fill="#c4c4c4"/><circle cx="9.8" cy="3.2" r="1.1" fill="#3c3c3c"/></svg>
<svg class="a" style="left:1401.5px;top:656.5px;" width="13" height="13" viewBox="0 0 13 13"><circle cx="6.5" cy="6.5" r="6.2" fill="#c4c4c4"/><rect x="5.6" y="2.6" width="1.9" height="5.2" fill="#3c3c3c"/><rect x="5.6" y="8.8" width="1.9" height="1.9" fill="#3c3c3c"/></svg>
<svg class="a" style="left:1428px;top:656.5px;" width="13" height="13" viewBox="0 0 13 13"><path d="M6.5 0.8L8.2 4.8L12.4 5.2L9.2 8L10.2 12.2L6.5 10L2.8 12.2L3.8 8L0.6 5.2L4.8 4.8Z" fill="#8e8e8e"/></svg>
<svg class="a" style="left:1454px;top:657px;" width="16" height="12" viewBox="0 0 16 12"><path d="M1 6Q8 -1.4 15 6Q8 13.4 1 6Z" fill="none" stroke="#c4c4c4" stroke-width="1.2"/><circle cx="8" cy="6" r="2.1" fill="#c4c4c4"/><path d="M13 0.6L3.6 11.6" stroke="#3c3c3c" stroke-width="2.6"/><path d="M12.6 0.8L4 11.2" stroke="#c4c4c4" stroke-width="1.1"/></svg>
<div class="t" style="left:1470.5px;top:655.0px;height:16px;line-height:16px;letter-spacing:0.449px;font-size:12.5px;">29</div>
<div class="a" style="left:878px;top:674px;width:208px;height:343.5px;background:#383838;"></div>
<div class="a" style="left:1086px;top:674px;width:1px;height:343.5px;background:#232323;"></div>
<div class="a" style="left:1087px;top:674px;width:403px;height:343.5px;background:#333333;"></div>
<div class="a" style="left:1087px;top:674px;width:403px;height:20.5px;background:#3f3f3f;"></div>
<div class="t" style="left:1091.5px;top:676.0px;height:16px;line-height:16px;letter-spacing:-0.035px;font-size:12.5px;">Assets</div>
<svg class="a" style="left:1136.5px;top:679.5px;" width="6" height="10" viewBox="0 0 6 10"><path d="M1 0.8L5.2 5L1 9.2" fill="none" stroke="#9a9a9a" stroke-width="1.2"/></svg>
<div class="t" style="left:1148px;top:676.0px;height:16px;line-height:16px;letter-spacing:0.500px;font-size:12.5px;font-weight:bold;">Prefab</div>
<svg class="a" style="left:1103px;top:696px;" width="14.5" height="14.5" viewBox="0 0 16 16"><path d="M8 1L14.5 4.2L8 7.6L1.5 4.2Z" fill="#8fe0ff"/><path d="M1.5 4.2L8 7.6V15L1.5 11.6Z" fill="#5cc3f0"/><path d="M14.5 4.2L8 7.6V15L14.5 11.6Z" fill="#3fa6d8"/><path d="M8 1L14.5 4.2V11.6L8 15L1.5 11.6V4.2Z M1.5 4.2L8 7.6L14.5 4.2M8 7.6V15" fill="none" stroke="#bfeeff" stroke-width="0.6" stroke-linejoin="round"/></svg>
<div class="t" style="left:1121.5px;top:695.5px;height:16px;line-height:16px;letter-spacing:0.422px;font-size:12.5px;">Bullet</div>
<svg class="a" style="left:1103px;top:712px;" width="14.5" height="14.5" viewBox="0 0 16 16"><path d="M8 1L14.5 4.2L8 7.6L1.5 4.2Z" fill="#8fe0ff"/><path d="M1.5 4.2L8 7.6V15L1.5 11.6Z" fill="#5cc3f0"/><path d="M14.5 4.2L8 7.6V15L14.5 11.6Z" fill="#3fa6d8"/><path d="M8 1L14.5 4.2V11.6L8 15L1.5 11.6V4.2Z M1.5 4.2L8 7.6L14.5 4.2M8 7.6V15" fill="none" stroke="#bfeeff" stroke-width="0.6" stroke-linejoin="round"/></svg>
<div class="t" style="left:1121.5px;top:711.5px;height:16px;line-height:16px;letter-spacing:0.378px;font-size:12.5px;">Player</div>
<div class="a" style="left:1087px;top:997px;width:403px;height:20.5px;background:#3f3f3f;"></div>
<div class="a" style="left:1424px;top:1006.5px;width:50px;height:2px;background:#5a5a5a;"></div>
<div class="a" style="left:1419px;top:1002.5px;width:10px;height:10px;background:#a8a8a8;border-radius:50%;"></div>
<div class="a" style="left:878px;top:800.5px;width:208px;height:16px;background:#4d4d4d;"></div>
<svg class="a" style="left:882.0px;top:678.7px;" width="9" height="7" viewBox="0 0 9 7"><path d="M0 0H9L4.5 7Z" fill="#8a8a8a"/></svg>
<svg class="a" style="left:895.5px;top:675.2px;" width="13" height="13" viewBox="0 0 13 13"><path d="M6.5 0.6L8.3 4.7L12.6 5.1L9.3 8L10.3 12.3L6.5 10L2.7 12.3L3.7 8L0.4 5.1L4.7 4.7Z" fill="#c4c4c4"/></svg>
<div class="t" style="left:912.5px;top:673.7px;height:16px;line-height:16px;letter-spacing:0.409px;font-size:12.6px;font-weight:bold;">Favorites</div>
<svg class="a" style="left:909.0px;top:691.0px;" width="14" height="14" viewBox="0 0 16 16"><circle cx="6.5" cy="6.5" r="4.6" fill="none" stroke="#c4c4c4" stroke-width="1.2"/><path d="M10 10L14.5 14.5" stroke="#c4c4c4" stroke-width="1.6"/></svg>
<div class="t" style="left:926.5px;top:689.5px;height:16px;line-height:16px;letter-spacing:0.018px;font-size:12.5px;">All Materials</div>
<svg class="a" style="left:909.0px;top:707.1px;" width="14" height="14" viewBox="0 0 16 16"><circle cx="6.5" cy="6.5" r="4.6" fill="none" stroke="#c4c4c4" stroke-width="1.2"/><path d="M10 10L14.5 14.5" stroke="#c4c4c4" stroke-width="1.6"/></svg>
<div class="t" style="left:926.5px;top:705.6px;height:16px;line-height:16px;letter-spacing:0.004px;font-size:12.5px;">All Models</div>
<svg class="a" style="left:909.0px;top:723.0px;" width="14" height="14" viewBox="0 0 16 16"><circle cx="6.5" cy="6.5" r="4.6" fill="none" stroke="#c4c4c4" stroke-width="1.2"/><path d="M10 10L14.5 14.5" stroke="#c4c4c4" stroke-width="1.6"/></svg>
<div class="t" style="left:926.5px;top:721.5px;height:16px;line-height:16px;letter-spacing:-0.013px;font-size:12.5px;">All Prefabs</div>
<svg class="a" style="left:882.0px;top:757.8px;" width="9" height="7" viewBox="0 0 9 7"><path d="M0 0H9L4.5 7Z" fill="#8a8a8a"/></svg>
<svg class="a" style="left:894.5px;top:753.3px;" width="16" height="16" viewBox="0 0 16 16"><path d="M1.5 13V3.2H6L7.4 4.8H12.6V6.6" fill="none" stroke="#c2c2c2" stroke-width="1.2"/><path d="M1.6 13.2L4.2 7H15.4L12.8 13.2Z" fill="#c2c2c2"/></svg>
<div class="t" style="left:912.5px;top:752.8px;height:16px;line-height:16px;letter-spacing:0.263px;font-size:12.6px;font-weight:bold;">Assets</div>
<svg class="a" style="left:908.5px;top:769.0px;" width="16" height="16" viewBox="0 0 16 16"><path d="M1 13.5V2.8H6.2L7.6 4.6H14.6V13.5Z" fill="#c2c2c2"/></svg>
<div class="t" style="left:926.5px;top:768.5px;height:16px;line-height:16px;letter-spacing:0.055px;font-size:12.5px;">Materials</div>
<svg class="a" style="left:898.5px;top:789.1px;" width="5" height="8" viewBox="0 0 5 8"><path d="M0 0L5 4.0L0 8Z" fill="#8a8a8a"/></svg>
<svg class="a" style="left:908.5px;top:785.1px;" width="16" height="16" viewBox="0 0 16 16"><path d="M1 13.5V2.8H6.2L7.6 4.6H14.6V13.5Z" fill="#c2c2c2"/></svg>
<div class="t" style="left:926.5px;top:784.6px;height:16px;line-height:16px;letter-spacing:-0.157px;font-size:12.5px;">Plugins</div>
<svg class="a" style="left:908.5px;top:801.0px;" width="16" height="16" viewBox="0 0 16 16"><path d="M1 13.5V2.8H6.2L7.6 4.6H14.6V13.5Z" fill="#c2c2c2"/></svg>
<div class="t" style="left:926.5px;top:800.5px;height:16px;line-height:16px;letter-spacing:-0.021px;font-size:12.5px;">Prefab</div>
<svg class="a" style="left:898.5px;top:821.1px;" width="5" height="8" viewBox="0 0 5 8"><path d="M0 0L5 4.0L0 8Z" fill="#8a8a8a"/></svg>
<svg class="a" style="left:908.5px;top:817.1px;" width="16" height="16" viewBox="0 0 16 16"><path d="M1 13.5V2.8H6.2L7.6 4.6H14.6V13.5Z" fill="#c2c2c2"/></svg>
<div class="t" style="left:926.5px;top:816.6px;height:16px;line-height:16px;letter-spacing:-0.190px;font-size:12.5px;">Samples</div>
<svg class="a" style="left:908.5px;top:833.0px;" width="16" height="16" viewBox="0 0 16 16"><path d="M1 13.5V2.8H6.2L7.6 4.6H14.6V13.5Z" fill="#c2c2c2"/></svg>
<div class="t" style="left:926.5px;top:832.5px;height:16px;line-height:16px;letter-spacing:-0.132px;font-size:12.5px;">Scenes</div>
<svg class="a" style="left:908.5px;top:849.0px;" width="16" height="16" viewBox="0 0 16 16"><path d="M1 13.5V2.8H6.2L7.6 4.6H14.6V13.5Z" fill="#c2c2c2"/></svg>
<div class="t" style="left:926.5px;top:848.5px;height:16px;line-height:16px;letter-spacing:0.100px;font-size:12.5px;">Scripts</div>
<svg class="a" style="left:898.5px;top:869.0px;" width="5" height="8" viewBox="0 0 5 8"><path d="M0 0L5 4.0L0 8Z" fill="#8a8a8a"/></svg>
<svg class="a" style="left:908.5px;top:865.0px;" width="16" height="16" viewBox="0 0 16 16"><path d="M1 13.5V2.8H6.2L7.6 4.6H14.6V13.5Z" fill="#c2c2c2"/></svg>
<div class="t" style="left:926.5px;top:864.5px;height:16px;line-height:16px;letter-spacing:0.191px;font-size:12.5px;">TextMesh Pro</div>
<svg class="a" style="left:884.5px;top:885.0px;" width="5" height="8" viewBox="0 0 5 8"><path d="M0 0L5 4.0L0 8Z" fill="#8a8a8a"/></svg>
<svg class="a" style="left:894.5px;top:881.0px;" width="16" height="16" viewBox="0 0 16 16"><path d="M1 13.5V2.8H6.2L7.6 4.6H14.6V13.5Z" fill="#c2c2c2"/></svg>
<div class="t" style="left:912.5px;top:880.5px;height:16px;line-height:16px;letter-spacing:0.395px;font-size:12.6px;font-weight:bold;">Packages</div>
<!-- p_color -->
<div class="a" style="left:1679px;top:464px;width:233px;height:506px;background:#3c3c3c;box-shadow:0 0 6px rgba(0,0,0,0.45);"></div>
<div class="a" style="left:1679px;top:464px;width:233px;height:30px;background:#ffffff;"></div>
<div class="t" style="left:1687.5px;top:471.0px;height:16px;line-height:16px;letter-spacing:-0.118px;font-size:12.3px;color:#000;">Color</div>
<div class="a" style="left:1892px;top:471px;width:19px;height:18.5px;background:#c75050;color:#fff;text-align:center;line-height:17px;font-size:11px;font-weight:bold;">x</div>
<svg class="a" style="left:1686.7px;top:507.2px;" width="24" height="24" viewBox="-12 -12 24 24"><g transform="rotate(45)" fill="#c4c4c4"><rect x="-2.5" y="-10.6" width="5" height="7" rx="2.4"/><rect x="-4" y="-4.6" width="8" height="2.4" rx="0.6"/><path d="M-2.3 -2.2H2.3V6L0.6 10.4H-0.6L-2.3 6Z"/><path d="M-0.8 -0.4H0.8V5.2L0 7L-0.8 5.2Z" fill="#3c3c3c"/></g></svg>
<div class="a" style="left:1826px;top:509px;width:38px;height:24px;background:#ffffff;border-radius:3px 0 0 3px;"></div>
<div class="a" style="left:1864px;top:509px;width:38px;height:24px;background-color:#fff;background-image:linear-gradient(45deg,#ccc 25%,transparent 25%,transparent 75%,#ccc 75%),linear-gradient(45deg,#ccc 25%,transparent 25%,transparent 75%,#ccc 75%);background-size:8px 8px;background-position:0 0,4px 4px;border-radius:0 3px 3px 0;"></div>
<div class="a" style="left:1864px;top:509px;width:38px;height:24px;background:rgba(150,150,150,0.35);border-radius:0 3px 3px 0;"></div>
<div class="a" style="left:1687px;top:543px;width:216px;height:216px;background:conic-gradient(from 90deg,#f00,#f0f,#00f,#0ff,#0f0,#ff0,#f00);border-radius:50%;"></div>
<div class="a" style="left:1710px;top:566px;width:170px;height:170px;background:#3c3c3c;border-radius:50%;"></div>
<div class="a" style="left:1742px;top:598px;width:106px;height:106px;background:linear-gradient(to top,#000,rgba(0,0,0,0)),linear-gradient(to right,#fff,#f00);"></div>
<div class="a" style="left:1880.3px;top:640.3px;width:17.4px;height:17.4px;background:#ff0000;border:2px solid #fff;border-radius:50%;"></div>
<div class="a" style="left:1736px;top:636px;width:10px;height:10px;background:rgba(150,150,150,0.2);border:1px solid #000;border-radius:50%;"></div>
<div class="a" style="left:1819.5px;top:772px;width:81.5px;height:16.5px;background:#515151;border:1px solid #303030;border-radius:3px;box-sizing:border-box;color:#e4e4e4;line-height:14.5px;padding-left:3px;white-space:nowrap;overflow:hidden;font-size:12.5px;">RGB 0-255<svg width="7" height="4" style="position:absolute;left:70px;top:5.25px"><path d="M0 0H7L3.5 4Z" fill="#e4e4e4"/></svg></div>
<div class="t" style="left:1690px;top:798.0px;height:16px;line-height:16px;font-size:12.5px;color:#c4c4c4;">R</div>
<div class="a" style="left:1705.5px;top:797.5px;width:146px;height:17px;background:linear-gradient(to right,rgb(0,150,150),rgb(255,150,150));border:1px solid #1a1a1a;border-radius:2px;box-sizing:border-box;"></div>
<div class="a" style="left:1789.5px;top:798.5px;width:3px;height:15px;background:#e8e8e8;box-shadow:0 0 1px #333;"></div>
<div class="a" style="left:1857px;top:797.5px;width:45px;height:17px;background:#2a2a2a;border:1px solid #1f1f1f;border-top-color:#0f0f0f;border-radius:3px;box-sizing:border-box;color:#d2d2d2;line-height:16px;padding-left:3px;white-space:nowrap;overflow:hidden;font-size:12.5px;">150</div>
<div class="t" style="left:1690px;top:824.0px;height:16px;line-height:16px;font-size:12.5px;color:#c4c4c4;">G</div>
<div class="a" style="left:1705.5px;top:823.5px;width:146px;height:17px;background:linear-gradient(to right,rgb(150,0,150),rgb(150,255,150));border:1px solid #1a1a1a;border-radius:2px;box-sizing:border-box;"></div>
<div class="a" style="left:1789.5px;top:824.5px;width:3px;height:15px;background:#e8e8e8;box-shadow:0 0 1px #333;"></div>
<div class="a" style="left:1857px;top:823.5px;width:45px;height:17px;background:#2a2a2a;border:1px solid #1f1f1f;border-top-color:#0f0f0f;border-radius:3px;box-sizing:border-box;color:#d2d2d2;line-height:16px;padding-left:3px;white-space:nowrap;overflow:hidden;font-size:12.5px;">150</div>
<div class="t" style="left:1690px;top:850.0px;height:16px;line-height:16px;font-size:12.5px;color:#c4c4c4;">B</div>
<div class="a" style="left:1705.5px;top:849.5px;width:146px;height:17px;background:linear-gradient(to right,rgb(150,150,0),rgb(150,150,255));border:1px solid #1a1a1a;border-radius:2px;box-sizing:border-box;"></div>
<div class="a" style="left:1789.5px;top:850.5px;width:3px;height:15px;background:#e8e8e8;box-shadow:0 0 1px #333;"></div>
<div class="a" style="left:1857px;top:849.5px;width:45px;height:17px;background:#2a2a2a;border:1px solid #1f1f1f;border-top-color:#0f0f0f;border-radius:3px;box-sizing:border-box;color:#d2d2d2;line-height:16px;padding-left:3px;white-space:nowrap;overflow:hidden;font-size:12.5px;">150</div>
<div class="t" style="left:1690px;top:876.0px;height:16px;line-height:16px;font-size:12.5px;color:#7baefa;">A</div>
<div class="a" style="left:1705.5px;top:875.5px;width:146px;height:17px;background-color:#fff;background-image:linear-gradient(45deg,#ccc 25%,transparent 25%,transparent 75%,#ccc 75%),linear-gradient(45deg,#ccc 25%,transparent 25%,transparent 75%,#ccc 75%);background-size:8px 8px;background-position:0 0,4px 4px;border:1px solid #14205a;border-radius:2px;box-sizing:border-box;"></div>
<div class="a" style="left:1706.5px;top:876.5px;width:144px;height:15px;background:linear-gradient(to right,rgba(150,150,150,0),rgba(150,150,150,1));"></div>
<div class="a" style="left:1757px;top:876.5px;width:2.5px;height:15px;background:#e8e8e8;box-shadow:0 0 1px #333;"></div>
<div class="a" style="left:1857px;top:875.5px;width:45px;height:17px;background:#2a2a2a;border:1px solid #3a79bb;border-top-color:#0f0f0f;border-radius:3px;box-sizing:border-box;color:#d2d2d2;line-height:16px;padding-left:3px;white-space:nowrap;overflow:hidden;font-size:12.5px;border-top-color:#3a79bb;">90</div>
<div class="t" style="left:1690px;top:902.0px;height:16px;line-height:16px;letter-spacing:0.068px;font-size:12.5px;color:#c4c4c4;">Hexadecimal</div>
<div class="a" style="left:1819.5px;top:902px;width:82.5px;height:17px;background:#2a2a2a;border:1px solid #1f1f1f;border-top-color:#0f0f0f;border-radius:3px;box-sizing:border-box;color:#d2d2d2;line-height:16px;padding-left:3px;white-space:nowrap;overflow:hidden;font-size:12.5px;">969696</div>
<svg class="a" style="left:1690.0px;top:931.5px;" width="9" height="7" viewBox="0 0 9 7"><path d="M0 0H9L4.5 7Z" fill="#8a8a8a"/></svg>
<div class="t" style="left:1703px;top:926.5px;height:16px;line-height:16px;letter-spacing:0.139px;font-size:12.5px;color:#c4c4c4;">Swatches</div>
<svg class="a" style="left:1890.5px;top:927.0px;" width="3" height="11" viewBox="0 0 3 11"><g fill="#c4c4c4"><rect x="0.5" y="0.3" width="2" height="2.2"/><rect x="0.5" y="4.4" width="2" height="2.2"/><rect x="0.5" y="8.5" width="2" height="2.2"/></g></svg>
<div class="a" style="left:1690px;top:946px;width:10px;height:10px;background:#2a2a2a;border:1px solid #0a0a0a;border-radius:2px;"></div>
<div class="a" style="left:1692.5px;top:948.5px;width:6px;height:6px;background:#b8b8b8;"></div>
<div class="t" style="left:1710px;top:945.5px;height:16px;line-height:16px;letter-spacing:0.177px;font-size:12.5px;color:#808080;">Click to add new preset</div>
<!-- p_task -->
<div class="a" style="left:0px;top:1018px;width:1920px;height:22px;background:#191919;"></div>
<div class="a" style="left:1815px;top:1020px;width:1px;height:19px;background:#2a2a2a;"></div>
<div class="a" style="left:1841px;top:1020px;width:1px;height:19px;background:#2a2a2a;"></div>
<div class="a" style="left:1867.5px;top:1020px;width:1px;height:19px;background:#2a2a2a;"></div>
<div class="a" style="left:1894px;top:1020px;width:1px;height:19px;background:#2a2a2a;"></div>
<svg class="a" style="left:1819.5px;top:1022.5px;" width="15" height="15" viewBox="0 0 15 15"><ellipse cx="7.5" cy="8.6" rx="3.4" ry="4.4" fill="#b4b4b4"/><path d="M4.8 4.2A2.8 2.8 0 0 1 10.2 4.2Z" fill="#b4b4b4"/><path d="M4 7L1.6 5.6M3.8 9.2H1M4.2 11.4L1.8 13.2M11 7L13.4 5.6M11.2 9.2H14M10.8 11.4L13.2 13.2" stroke="#b4b4b4" stroke-width="1.1"/><path d="M1.4 1.4L13.8 14" stroke="#191919" stroke-width="2.4"/><path d="M1.2 1.6L13.6 14.2" stroke="#b4b4b4" stroke-width="1.1"/></svg>
<svg class="a" style="left:1846.5px;top:1022.5px;" width="15" height="15" viewBox="0 0 15 15"><ellipse cx="7.5" cy="3.6" rx="5.4" ry="2.4" fill="#b4b4b4"/><path d="M2.1 5.4V11.4A5.4 2.4 0 0 0 12.9 11.4V5.4A5.4 2.4 0 0 1 2.1 5.4Z" fill="#b4b4b4"/><path d="M2.1 8.6A5.4 2.4 0 0 0 12.9 8.6" stroke="#191919" stroke-width="0.9" fill="none"/><path d="M1.4 1.4L13.8 14" stroke="#191919" stroke-width="2.4"/><path d="M1.2 1.6L13.6 14.2" stroke="#b4b4b4" stroke-width="1.1"/></svg>
<svg class="a" style="left:1872.5px;top:1022.5px;" width="15" height="15" viewBox="0 0 15 15"><g fill="none" stroke="#b4b4b4" stroke-width="1.1"><circle cx="7.5" cy="7.5" r="5.6"/><ellipse cx="7.5" cy="7.5" rx="2.4" ry="5.6"/><path d="M2 7.5H13"/></g><path d="M1.4 1.4L13.8 14" stroke="#191919" stroke-width="2.4"/><path d="M1.2 1.6L13.6 14.2" stroke="#b4b4b4" stroke-width="1.1"/></svg>
<svg class="a" style="left:1899px;top:1022.5px;" width="15" height="15" viewBox="0 0 15 15"><circle cx="7.5" cy="7.5" r="6.2" fill="none" stroke="#b4b4b4" stroke-width="1.2"/><path d="M4.6 7.6L6.8 9.8L10.6 5.4" fill="none" stroke="#b4b4b4" stroke-width="1.3"/></svg>
<div class="a" style="left:0px;top:1040px;width:1920px;height:40px;background:#1d1d1d;"></div>
<svg class="a" style="left:15.5px;top:1052px;" width="17" height="17" viewBox="0 0 17 17"><path d="M0 2.4L7 1.4V8H0ZM8 1.2L17 0V8H8ZM0 9H7V15.6L0 14.6ZM8 9H17V17L8 15.8Z" fill="#ffffff"/></svg>
<div class="a" style="left:48px;top:1040px;width:288px;height:40px;background:#363636;border:1px solid #5c5c5c;box-sizing:border-box;"></div>
<svg class="a" style="left:59px;top:1051px;" width="18" height="18" viewBox="0 0 18 18"><circle cx="11" cy="7" r="5" fill="none" stroke="#e8e8e8" stroke-width="1.3"/><path d="M7.4 10.6L1.2 16.8" stroke="#e8e8e8" stroke-width="1.5"/></svg>
<div class="t" style="left:88px;top:1051.0px;height:20px;line-height:20px;letter-spacing:-0.402px;font-size:15.3px;color:#e6e6e6;">Escriu aquí per cercar</div>
<svg class="a" style="left:262px;top:1041px;overflow:hidden;" width="73" height="38" viewBox="0 0 73 38"><defs><radialGradient id="gl1" cx="0.42" cy="0.5" r="0.6"><stop offset="0" stop-color="#f6e7b0"/><stop offset="0.55" stop-color="#b99a5c"/><stop offset="1" stop-color="#363636" stop-opacity="0"/></radialGradient><radialGradient id="gl2" cx="0.5" cy="0.45" r="0.6"><stop offset="0" stop-color="#e8d69c"/><stop offset="0.6" stop-color="#8a7246"/><stop offset="1" stop-color="#363636" stop-opacity="0"/></radialGradient></defs><rect x="0" y="0" width="46" height="38" fill="url(#gl1)"/><rect x="36" y="0" width="38" height="38" fill="url(#gl2)"/><ellipse cx="22" cy="7" rx="10" ry="6.5" fill="#1a1a24"/><ellipse cx="22.5" cy="17" rx="6.6" ry="8.6" fill="#6b4630"/><path d="M16 10Q22 5 29 10L28 13Q22 10 17 13Z" fill="#1a1a24"/><path d="M8 38Q10 28 18 26L22 29L27 26Q35 28 37 38Z" fill="#15151c"/><path d="M17 26L22.5 34L28 26" fill="none" stroke="#d8a830" stroke-width="1.4"/><rect x="14.5" y="21" width="1.6" height="6" fill="#e0b030"/><rect x="28.6" y="21" width="1.6" height="6" fill="#e0b030"/><ellipse cx="59" cy="8" rx="4.6" ry="4" fill="#5e3d2a"/><path d="M54.6 6Q59 1 63.6 6L63 7.6H55Z" fill="#2a8fa0"/><path d="M50 30Q52 14 58 13Q64 14 64 24L66 38H50Z" fill="#efe9dc"/><path d="M62 16L69 19" stroke="#b0b0b0" stroke-width="1.4"/><circle cx="69.5" cy="19" r="1.6" fill="#d0d0d0"/><path d="M64 24H74V38H62Z" fill="#8c5a38"/></svg>
<svg class="a" style="left:351px;top:1051px;" width="18" height="18" viewBox="0 0 18 18"><circle cx="9" cy="9" r="6.8" fill="none" stroke="#ffffff" stroke-width="2.2"/></svg>
<svg class="a" style="left:398px;top:1051px;" width="20" height="18" viewBox="0 0 20 18"><g fill="none" stroke="#ffffff" stroke-width="1.3"><rect x="2.6" y="4.6" width="10" height="8.8"/><path d="M1 1.6H13.6M1 16.4H13.6"/><path d="M16.6 1V3.4M16.6 6V12M16.6 14.6V17"/></g></svg>
<div class="a" style="left:447px;top:1047.5px;width:24px;height:24px;background:linear-gradient(#fb9a3a,#f2711c);border-radius:4px;"></div>
<svg class="a" style="left:450px;top:1051px;" width="18" height="17" viewBox="0 0 18 17"><path d="M3.2 3.2Q6 0.8 9 3.8Q12 0.8 14.8 3.2Q16.6 5.4 14.4 8.5Q16.6 11.6 14.8 13.8Q12 16.2 9 13.2Q6 16.2 3.2 13.8Q1.4 11.6 3.6 8.5Q1.4 5.4 3.2 3.2Z" fill="#fff"/><path d="M6 5.2Q9 7.6 12 5.2M6 11.8Q9 9.4 12 11.8" fill="none" stroke="#f2711c" stroke-width="1.6"/><rect x="6.6" y="7.6" width="4.8" height="1.8" fill="#f2711c"/></svg>
<svg class="a" style="left:496px;top:1048px;" width="24" height="22" viewBox="0 0 24 22"><path d="M1 3.6H8.4L10.4 5.8H23V19H1Z" fill="#f7c64a"/><path d="M1 7.6H23V19.4H1Z" fill="#fbd66c"/><path d="M6 12H18V21H14.4V16.4H9.6V21H6Z" fill="#3a96dd"/><rect x="6" y="12" width="12" height="2.2" fill="#2b7fc4"/></svg>
<svg class="a" style="left:545px;top:1047.5px;" width="24" height="24" viewBox="0 0 24 24"><circle cx="12" cy="12" r="11.5" fill="#fff"/><path d="M12 0.5A11.5 11.5 0 0 1 22 6.3H12A5.7 5.7 0 0 0 7 9.2L2 6.3A11.5 11.5 0 0 1 12 0.5Z" fill="#e94335"/><path d="M22 6.3A11.5 11.5 0 0 1 12 23.5L17 14.8A5.7 5.7 0 0 0 17 9.2V6.3Z" fill="#fbbc05"/><path d="M12 23.5A11.5 11.5 0 0 1 2 6.3L7 14.8A5.7 5.7 0 0 0 12 17.7H17L12 23.5Z" fill="#34a853"/><circle cx="12" cy="12" r="5.6" fill="#fff"/><circle cx="12" cy="12" r="4.5" fill="#4285f4"/></svg>
<svg class="a" style="left:594px;top:1048px;" width="24" height="24" viewBox="0 0 24 24"><path d="M17.4 0.6L23.4 3.4V20.6L17.4 23.4L6.6 13.4L2.4 16.8L0.6 15.8V8.2L2.4 7.2L6.6 10.6Z" fill="#2a9df0"/><path d="M17.4 0.6L23.4 3.4V20.6L17.4 23.4Z" fill="#1177cc"/><path d="M17.4 6.8L10.4 12L17.4 17.2Z" fill="#1f1f1f"/><path d="M0.6 8.2L2.4 7.2L6.6 10.6L4.6 12L6.6 13.4L2.4 16.8L0.6 15.8L3.8 12Z" fill="#0f6fbd"/></svg>
<div class="a" style="left:631px;top:1040px;width:47px;height:40px;background:#424242;"></div>
<div class="a" style="left:675px;top:1040px;width:1px;height:38px;background:#2a2a2a;"></div>
<svg class="a" style="left:642px;top:1048px;" width="24" height="24" viewBox="0 0 24 24"><path d="M12 1.5L21 6.6V17.4L12 22.5L3 17.4V6.6Z" fill="#111"/><path d="M12 12V19.6M12 12L5.4 8.2M12 12L18.6 8.2" stroke="#fff" stroke-width="2.3"/><path d="M12 4.6V8.2M5.4 15.8L8.2 14.2M18.6 15.8L15.8 14.2" stroke="#fff" stroke-width="1.6"/></svg>
<div class="a" style="left:692.5px;top:1047.5px;width:21px;height:21px;background:#0c0a3e;border:1.5px solid #8fb5f5;color:#9ec3ff;font-weight:bold;font-size:12.5px;line-height:21px;text-align:center;">Ps</div>
<svg class="a" style="left:740.5px;top:1047.5px;" width="24" height="24" viewBox="0 0 24 24"><circle cx="12" cy="12" r="11.5" fill="#fff"/><path d="M12 0.5A11.5 11.5 0 0 1 22 6.3H12A5.7 5.7 0 0 0 7 9.2L2 6.3A11.5 11.5 0 0 1 12 0.5Z" fill="#e94335"/><path d="M22 6.3A11.5 11.5 0 0 1 12 23.5L17 14.8A5.7 5.7 0 0 0 17 9.2V6.3Z" fill="#fbbc05"/><path d="M12 23.5A11.5 11.5 0 0 1 2 6.3L7 14.8A5.7 5.7 0 0 0 12 17.7H17L12 23.5Z" fill="#34a853"/><circle cx="12" cy="12" r="5.6" fill="#fff"/><circle cx="12" cy="12" r="4.5" fill="#4285f4"/></svg>
<svg class="a" style="left:751px;top:1059px;" width="16" height="14" viewBox="0 0 16 14"><ellipse cx="8" cy="7" rx="7" ry="6" fill="#1a1410"/><ellipse cx="8.6" cy="9" rx="4.2" ry="3.6" fill="#e8cdb4"/><path d="M3 5Q8 0.4 14 5L12 7Q8 4.4 4.4 7Z" fill="#1a1410"/></svg>
<svg class="a" style="left:791px;top:1048px;" width="24" height="24" viewBox="0 0 24 24"><path d="M17.2 0.8L23.2 3.4V20.6L17.2 23.2L6.4 14.6L2.6 17.6L0.8 16.6V7.4L2.6 6.4L6.4 9.4Z" fill="#9b72d6"/><path d="M17.2 0.8L23.2 3.4V20.6L17.2 23.2Z" fill="#7b4fc0"/><path d="M17.2 7.2L11 12L17.2 16.8Z" fill="#1f1f1f"/><path d="M3 9.4L6 12L3 14.6Z" fill="#1f1f1f"/></svg>
<div class="a" style="left:487.5px;top:1078px;width:40.0px;height:2px;background:#76b9ed;"></div>
<div class="a" style="left:631px;top:1078px;width:47px;height:2px;background:#76b9ed;"></div>
<div class="a" style="left:684px;top:1078px;width:32px;height:2px;background:#76b9ed;"></div>
<div class="a" style="left:733px;top:1078px;width:33px;height:2px;background:#76b9ed;"></div>
<div class="a" style="left:782px;top:1078px;width:33px;height:2px;background:#76b9ed;"></div>
<svg class="a" style="left:1479px;top:1050px;" width="24" height="22" viewBox="0 0 24 22"><circle cx="15.6" cy="7" r="5.4" fill="#f59a23"/><circle cx="15.6" cy="7" r="3.8" fill="#fbb040"/><path d="M5.6 20.6A4.6 4.6 0 0 1 5 11.6A6.2 6.2 0 0 1 16.6 10.4A5.2 5.2 0 0 1 18.4 20.6Z" fill="#dfe9f7"/><path d="M5.6 20.6A4.6 4.6 0 0 1 3.2 19H20.8A5.2 5.2 0 0 1 18.4 20.6Z" fill="#9db9e4"/></svg>
<div class="t" style="left:1511px;top:1052.0px;height:18px;line-height:18px;letter-spacing:0.268px;font-size:12.5px;color:#ffffff;">19°C</div>
<div class="t" style="left:1549px;top:1052.0px;height:18px;line-height:18px;letter-spacing:0.558px;font-size:12.7px;color:#ffffff;">Mayorm. nubla...</div>
<svg class="a" style="left:1676.5px;top:1055px;" width="13" height="8" viewBox="0 0 13 8"><path d="M1 7L6.5 1.4L12 7" fill="none" stroke="#fff" stroke-width="1.3"/></svg>
<svg class="a" style="left:1698px;top:1053px;" width="18" height="13" viewBox="0 0 18 13"><rect x="4.4" y="3.6" width="11" height="6.6" fill="none" stroke="#fff" stroke-width="1.2"/><rect x="15.6" y="5.4" width="1.6" height="3" fill="#fff"/><rect x="5.8" y="5" width="6" height="3.8" fill="#fff"/><path d="M2.4 0.6V3M4.4 0.6V3M1 3H5.8V5A2.4 2.4 0 0 1 1 5ZM3.4 7.4V11" stroke="#fff" stroke-width="1" fill="#1f1f1f"/></svg>
<svg class="a" style="left:1725px;top:1052px;" width="15" height="15" viewBox="0 0 15 15"><g fill="none" stroke="#fff" stroke-width="1.3"><path d="M1.4 13.6A12 12 0 0 1 13.6 1.6" stroke-opacity="0.95"/><path d="M4.8 13.6A8.6 8.6 0 0 1 13.6 5" /><path d="M8.2 13.6A5.2 5.2 0 0 1 13.6 8.4"/></g><circle cx="12.4" cy="12.6" r="1.5" fill="#fff"/></svg>
<svg class="a" style="left:1746px;top:1052px;" width="17" height="15" viewBox="0 0 17 15"><path d="M1 5.4H3.6L7.4 2V13L3.6 9.6H1Z" fill="none" stroke="#fff" stroke-width="1.1"/><g fill="none" stroke="#fff" stroke-width="1.1"><path d="M9.4 5.4Q10.8 7.5 9.4 9.6"/><path d="M11.4 3.8Q13.8 7.5 11.4 11.2"/><path d="M13.6 2.2Q16.8 7.5 13.6 12.8" stroke-opacity="0.5"/></g></svg>
<div class="t" style="left:1774.5px;top:1050.5px;height:18px;line-height:18px;letter-spacing:-1.000px;font-size:12.3px;color:#ffffff;">CAT</div>
<div class="t" style="left:1794.5px;top:1043.0px;height:16px;line-height:16px;font-size:12.3px;width:80px;text-align:center;color:#ffffff;">15:43</div>
<div class="t" style="left:1794.5px;top:1061.0px;height:16px;line-height:16px;font-size:12.3px;width:80px;text-align:center;color:#ffffff;">21/2/2024</div>
<svg class="a" style="left:1879px;top:1051.5px;" width="17" height="17" viewBox="0 0 17 17"><path d="M0.6 0.6H16.4V12H11L8.5 14.6L6 12H0.6Z" fill="#fff"/><path d="M3.4 4H13.6M3.4 6.4H13.6M3.4 8.8H10" stroke="#1f1f1f" stroke-width="1"/></svg>
<div class="a" style="left:1915.5px;top:1043px;width:1px;height:37px;background:#8a8a8a;"></div>
<!-- p_arrows -->
<svg class="a" style="left:0px;top:0px;pointer-events:none;" width="1920" height="1080" viewBox="0 0 1920 1080"><path d="M896.2 392.3L1014.8 245.2" stroke="#fff" stroke-width="2.6" fill="none"/><path d="M1025.5 232.0L1017.2 251.0L1014.8 245.2L1008.7 244.1Z" fill="#fff"/><path d="M1059.6 530.8L1632.0 506.5" stroke="#fff" stroke-width="2.6" fill="none"/><path d="M1649.0 505.8L1629.3 512.1L1632.0 506.5L1628.8 501.2Z" fill="#fff"/><path d="M1702.5 587.5L1746.3 630.5" stroke="#fff" stroke-width="2.6" fill="none"/><path d="M1757.0 641.0L1740.7 632.0L1746.3 630.5L1747.7 624.8Z" fill="#fff"/><path d="M1613.8 995.0L1742.8 899.6" stroke="#fff" stroke-width="2.6" fill="none"/><path d="M1756.5 889.5L1743.7 905.8L1742.8 899.6L1737.1 897.0Z" fill="#fff"/></svg>
</div>
</body></html>
